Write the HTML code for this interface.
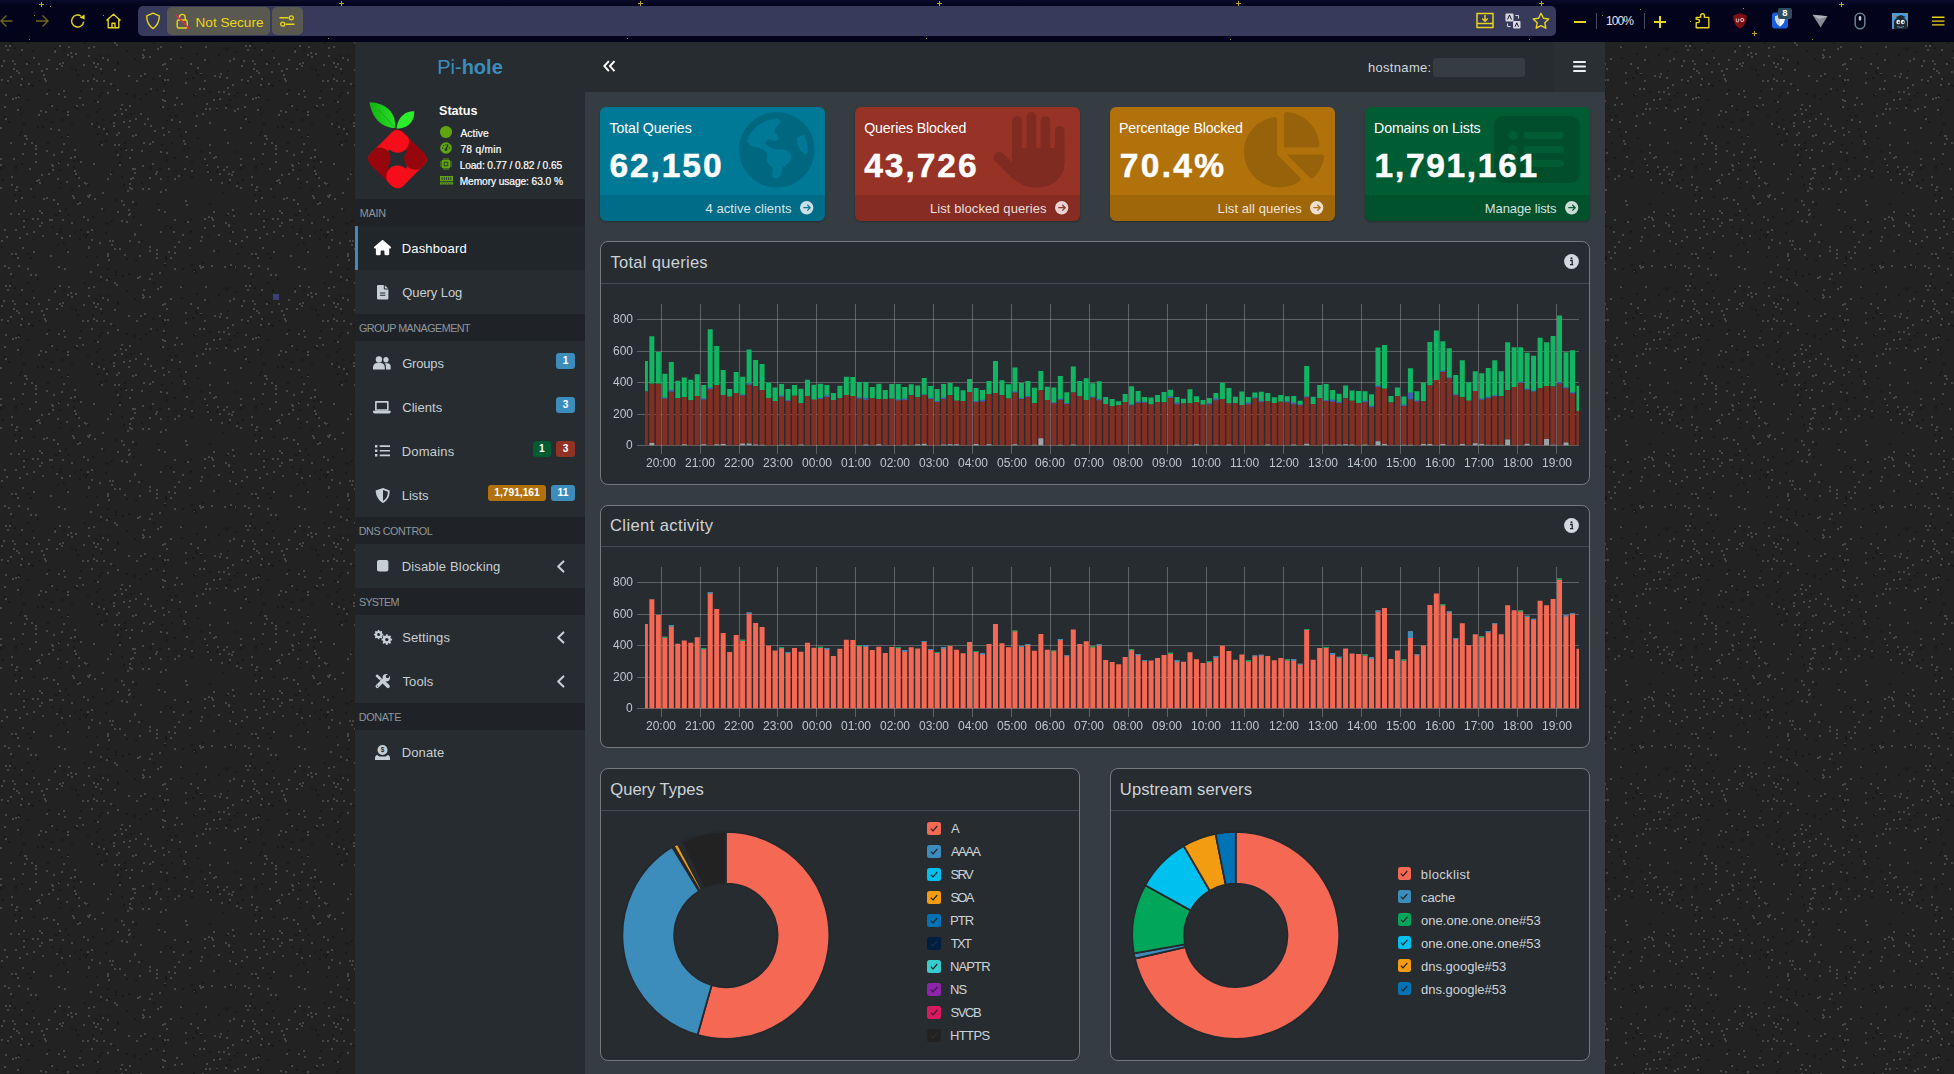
<!DOCTYPE html><html lang="en"><head><meta charset="utf-8"><title>Pi-hole</title><style>
*{box-sizing:border-box}
html,body{margin:0;padding:0}
body{width:1954px;height:1074px;overflow:hidden;position:relative;background:#222;font-family:"Liberation Sans",sans-serif;color:#cfd6db}
.abs{position:absolute}
svg{position:absolute;overflow:visible}
#chrome{position:absolute;left:0;top:0;width:1954px;height:42px;background:#03031b}
#chrome .urlbar{position:absolute;left:138px;top:6px;width:1418px;height:30px;border-radius:5px;background:#373a5b}
#chrome .chip{position:absolute;top:7px;height:28px;border-radius:5px;background:#5a594f}
#chrome .y{color:#e9d519}
.star{position:absolute;color:#e9d519;font-size:9px;line-height:9px}
#bg{position:absolute;left:0;top:42px;width:1954px;height:1032px}
#wrap{position:absolute;left:355px;top:42px;width:1250px;height:1032px;background:#353c42}
#logo{position:absolute;left:0;top:0;width:230px;height:50px;background:#272c30;color:#3c8dbc;font-size:20px;line-height:50px;text-align:center}
#logo b{font-weight:bold}
#nav{position:absolute;left:230px;top:0;width:1020px;height:50px;background:#272c30}
#side{position:absolute;left:0;top:50px;width:230px;height:982px;background:#272c30}
.hdr{position:absolute;left:0;width:230px;height:27px;background:#1f2327;color:#8e979d;font-size:10.8px;line-height:27px;white-space:nowrap}
.item{position:absolute;left:0;width:230px;height:44px;color:#c6cfd4;font-size:13px;line-height:44px;white-space:nowrap}
.item span.t{position:absolute;top:0.8px}
.item.active{background:#21262a;border-left:3px solid #3c8dbc;color:#fff}
.badge{position:absolute;top:12px;height:16px;border-radius:3px;color:#fff;font-weight:bold;font-size:10.2px;line-height:16.5px;text-align:center}
.sbox{position:absolute;top:65px;width:225px;height:114px;border-radius:6px;overflow:hidden;color:#fff;box-shadow:0 1px 2px rgba(0,0,0,.25)}
.sbox .ttl{position:absolute;top:12px;font-size:14.2px;line-height:18px;white-space:nowrap}
.sbox .num{position:absolute;top:39px;-webkit-text-stroke:.5px #fff;font-size:33.5px;line-height:40px;font-weight:bold;white-space:nowrap}
.sbox .foot{position:absolute;left:0;top:88px;width:225px;height:26px;background:rgba(0,0,0,.1);font-size:13px;line-height:26px;color:rgba(255,255,255,.85);white-space:nowrap}
.box{position:absolute;background:#272c30;border:1px solid #74797d;border-radius:8px}
.box .bh{position:absolute;left:0;top:0;right:0;height:42px;border-bottom:1px solid #454b50;font-size:16.6px;line-height:40px;color:#cdd3d8;white-space:nowrap}
.box .bh span{position:absolute;top:1px}
.lg{position:absolute;font-size:13px;line-height:16px;color:#cdd3d8;white-space:nowrap}
.lgb{position:absolute;width:13.600px;height:13.400px;border-radius:2.500px}
.ax{position:absolute;font-size:12px;line-height:12px;color:#bcc7cd;white-space:nowrap;will-change:transform}
</style></head><body>
<svg class="noise" width="0" height="0" style="position:absolute"><defs><pattern id="stars" width="240" height="240" patternUnits="userSpaceOnUse"><rect width="240" height="240" fill="#222222"/><path d="M82 38h2v2h-2zM101 166h2v2h-2zM12 18h2v2h-2zM210 137h2v2h-2zM24 93h2v2h-2zM149 14h2v2h-2zM232 129h2v2h-2zM54 9h2v2h-2zM22 111h2v2h-2zM107 17h2v2h-2zM61 23h2v2h-2zM141 108h2v2h-2zM15 211h2v2h-2zM144 31h2v2h-2zM57 161h2v2h-2zM160 149h2v2h-2zM15 147h2v2h-2zM149 101h2v2h-2zM12 56h2v2h-2zM11 142h2v2h-2zM219 34h2v2h-2zM74 107h2v2h-2zM36 138h2v2h-2zM30 146h2v2h-2zM78 143h2v2h-2zM208 174h2v2h-2zM46 26h2v2h-2zM148 146h2v2h-2zM163 48h2v2h-2zM95 24h2v2h-2zM140 182h2v2h-2zM16 144h2v2h-2zM15 158h2v2h-2zM52 127h2v2h-2zM174 136h2v2h-2zM109 198h2v2h-2zM80 119h2v2h-2zM149 236h2v2h-2zM116 92h2v2h-2zM76 63h2v2h-2zM203 46h2v2h-2zM178 199h2v2h-2zM62 20h2v2h-2zM147 76h2v2h-2zM134 126h2v2h-2zM224 87h2v2h-2zM186 114h2v2h-2zM73 155h2v2h-2zM18 30h2v2h-2zM131 107h2v2h-2zM42 193h2v2h-2zM87 38h2v2h-2zM125 107h2v2h-2zM10 171h2v2h-2zM19 195h2v2h-2zM142 146h2v2h-2zM202 224h2v2h-2zM209 80h2v2h-2zM87 177h2v2h-2zM89 152h2v2h-2zM127 148h2v2h-2zM204 116h2v2h-2zM17 215h2v2h-2zM23 69h2v2h-2zM121 178h2v2h-2zM170 16h2v2h-2zM15 187h2v2h-2zM179 79h2v2h-2zM165 147h2v2h-2zM174 210h2v2h-2zM114 72h2v2h-2zM183 98h2v2h-2zM227 171h2v2h-2zM88 5h2v2h-2zM118 90h2v2h-2zM43 156h2v2h-2zM29 126h2v2h-2zM15 55h2v2h-2zM196 73h2v2h-2zM33 189h2v2h-2zM63 101h2v2h-2zM100 234h2v2h-2zM223 127h2v2h-2zM20 42h2v2h-2zM114 102h2v2h-2zM140 71h2v2h-2zM226 35h2v2h-2zM209 110h2v2h-2zM221 140h2v2h-2zM71 180h2v2h-2zM106 91h2v2h-2zM174 226h2v2h-2zM97 59h2v2h-2zM38 21h2v2h-2zM45 38h2v2h-2zM59 168h2v2h-2zM59 3h2v2h-2zM124 212h2v2h-2zM150 46h2v2h-2zM67 72h2v2h-2zM1 37h2v2h-2zM107 136h2v2h-2zM94 156h2v2h-2zM144 81h2v2h-2zM32 176h2v2h-2zM219 131h2v2h-2zM158 167h2v2h-2zM173 189h2v2h-2zM13 116h2v2h-2zM230 222h2v2h-2zM199 223h2v2h-2zM174 204h2v2h-2zM143 100h2v2h-2zM101 102h2v2h-2zM100 26h2v2h-2zM123 162h2v2h-2zM102 15h2v2h-2zM48 17h2v2h-2zM53 112h2v2h-2zM41 28h2v2h-2zM87 153h2v2h-2zM13 26h2v2h-2zM0 145h2v2h-2zM38 137h2v2h-2zM25 93h2v2h-2zM157 6h2v2h-2zM18 223h2v2h-2zM53 157h2v2h-2zM96 38h2v2h-2zM162 64h2v2h-2zM88 154h2v2h-2zM93 121h2v2h-2zM31 29h2v2h-2zM217 124h2v2h-2zM119 122h2v2h-2zM123 79h2v2h-2zM21 36h2v2h-2zM26 191h2v2h-2zM87 189h2v2h-2zM67 122h2v2h-2zM212 177h2v2h-2zM41 132h2v2h-2zM5 52h2v2h-2zM135 92h2v2h-2zM37 176h2v2h-2zM139 234h2v2h-2zM6 194h2v2h-2zM135 76h2v2h-2zM164 221h2v2h-2zM23 178h2v2h-2zM216 66h2v2h-2zM132 93h2v2h-2zM232 42h2v2h-2zM91 197h2v2h-2zM57 136h2v2h-2zM138 199h2v2h-2zM128 84h2v2h-2zM162 57h2v2h-2zM156 207h2v2h-2zM201 194h2v2h-2zM218 49h2v2h-2zM206 61h2v2h-2zM209 102h2v2h-2zM189 205h2v2h-2zM58 51h2v2h-2zM132 126h2v2h-2zM91 187h2v2h-2zM7 7h2v2h-2zM202 71h2v2h-2zM120 66h2v2h-2zM49 177h2v2h-2zM154 88h2v2h-2zM114 206h2v2h-2zM185 89h2v2h-2zM93 20h2v2h-2zM56 26h2v2h-2zM58 120h2v2h-2zM50 86h2v2h-2zM52 123h2v2h-2zM159 230h2v2h-2zM156 215h2v2h-2zM0 122h2v2h-2zM232 167h2v2h-2zM88 204h2v2h-2zM164 21h2v2h-2zM213 169h2v2h-2zM30 232h2v2h-2zM99 200h2v2h-2zM182 192h2v2h-2zM51 122h2v2h-2zM227 45h2v2h-2zM111 202h2v2h-2zM162 85h2v2h-2zM22 205h2v2h-2zM184 101h2v2h-2zM118 102h2v2h-2zM190 21h2v2h-2zM185 40h2v2h-2zM43 32h2v2h-2zM7 38h2v2h-2zM151 231h2v2h-2zM119 206h2v2h-2zM167 37h2v2h-2zM156 211h2v2h-2zM152 121h2v2h-2zM168 89h2v2h-2zM39 140h2v2h-2zM140 33h2v2h-2zM5 3h2v2h-2zM204 185h2v2h-2zM166 26h2v2h-2zM134 191h2v2h-2zM35 111h2v2h-2zM223 49h2v2h-2zM211 223h2v2h-2zM54 7h2v2h-2zM64 54h2v2h-2zM74 128h2v2h-2zM61 195h2v2h-2zM150 83h2v2h-2zM66 139h2v2h-2zM107 213h2v2h-2zM33 15h2v2h-2zM232 189h2v2h-2zM90 229h2v2h-2zM117 169h2v2h-2zM149 208h2v2h-2zM231 132h2v2h-2zM107 211h2v2h-2zM234 224h2v2h-2zM128 33h2v2h-2zM136 38h2v2h-2zM134 130h2v2h-2zM4 223h2v2h-2zM112 198h2v2h-2zM46 155h2v2h-2zM1 198h2v2h-2zM204 38h2v2h-2zM44 36h2v2h-2zM121 158h2v2h-2zM185 30h2v2h-2zM142 15h2v2h-2zM83 174h2v2h-2zM132 135h2v2h-2zM142 123h2v2h-2zM200 198h2v2h-2zM27 226h2v2h-2zM143 14h2v2h-2zM63 48h2v2h-2zM70 10h2v2h-2zM197 25h2v2h-2zM129 115h2v2h-2zM143 7h2v2h-2zM194 228h2v2h-2zM233 16h2v2h-2zM113 83h2v2h-2zM156 129h2v2h-2zM155 131h2v2h-2zM51 177h2v2h-2zM70 115h2v2h-2zM130 136h2v2h-2zM206 122h2v2h-2zM129 63h2v2h-2zM178 133h2v2h-2zM224 224h2v2h-2zM237 66h2v2h-2zM236 143h2v2h-2zM228 51h2v2h-2zM215 114h2v2h-2zM35 106h2v2h-2zM31 100h2v2h-2zM113 80h2v2h-2zM18 171h2v2h-2zM61 109h2v2h-2zM18 54h2v2h-2zM171 77h2v2h-2zM200 31h2v2h-2zM229 198h2v2h-2zM39 183h2v2h-2zM164 169h2v2h-2zM93 36h2v2h-2zM64 226h2v2h-2zM35 119h2v2h-2zM56 191h2v2h-2zM24 101h2v2h-2zM226 124h2v2h-2zM41 170h2v2h-2zM213 57h2v2h-2zM41 180h2v2h-2zM110 131h2v2h-2zM103 86h2v2h-2zM107 50h2v2h-2zM91 81h2v2h-2zM23 184h2v2h-2zM93 4h2v2h-2zM86 141h2v2h-2zM117 112h2v2h-2zM180 4h2v2h-2zM98 84h2v2h-2zM132 159h2v2h-2zM75 131h2v2h-2zM16 28h2v2h-2zM235 201h2v2h-2zM58 224h2v2h-2zM26 21h2v2h-2zM67 69h2v2h-2zM10 231h2v2h-2zM199 46h2v2h-2zM69 193h2v2h-2zM33 209h2v2h-2zM108 217h2v2h-2zM233 173h2v2h-2zM209 66h2v2h-2zM103 38h2v2h-2zM137 235h2v2h-2zM131 146h2v2h-2zM126 179h2v2h-2zM83 22h2v2h-2zM71 14h2v2h-2zM204 176h2v2h-2zM46 108h2v2h-2zM229 18h2v2h-2zM68 4h2v2h-2zM162 22h2v2h-2zM205 66h2v2h-2zM21 155h2v2h-2zM219 56h2v2h-2zM17 67h2v2h-2zM220 31h2v2h-2zM116 2h2v2h-2zM86 141h2v2h-2zM106 237h2v2h-2zM234 68h2v2h-2zM159 33h2v2h-2zM11 134h2v2h-2zM181 61h2v2h-2zM28 41h2v2h-2zM67 12h2v2h-2zM46 51h2v2h-2zM79 160h2v2h-2zM78 135h2v2h-2zM194 52h2v2h-2zM74 114h2v2h-2zM128 172h2v2h-2zM45 69h2v2h-2zM88 205h2v2h-2zM4 64h2v2h-2zM9 3h2v2h-2zM4 187h2v2h-2zM129 141h2v2h-2zM48 131h2v2h-2zM121 62h2v2h-2zM114 27h2v2h-2zM168 209h2v2h-2zM166 110h2v2h-2zM168 126h2v2h-2zM139 213h2v2h-2zM227 100h2v2h-2zM129 78h2v2h-2zM176 55h2v2h-2zM58 87h2v2h-2zM50 213h2v2h-2zM225 180h2v2h-2zM186 162h2v2h-2zM35 103h2v2h-2zM88 13h2v2h-2zM214 33h2v2h-2zM3 18h2v2h-2zM160 189h2v2h-2zM225 65h2v2h-2zM110 41h2v2h-2zM14 21h2v2h-2zM170 215h2v2h-2zM97 222h2v2h-2zM129 171h2v2h-2zM72 153h2v2h-2zM62 177h2v2h-2zM75 11h2v2h-2zM117 47h2v2h-2zM40 68h2v2h-2zM114 0h2v2h-2zM67 93h2v2h-2zM84 140h2v2h-2zM82 62h2v2h-2zM8 225h2v2h-2zM79 55h2v2h-2zM91 46h2v2h-2zM0 85h2v2h-2zM97 21h2v2h-2zM121 71h2v2h-2zM128 167h2v2h-2zM51 63h2v2h-2zM129 198h2v2h-2zM1 23h2v2h-2zM67 209h2v2h-2zM22 36h2v2h-2zM102 150h2v2h-2zM10 100h2v2h-2zM5 76h2v2h-2zM77 161h2v2h-2zM59 21h2v2h-2zM149 135h2v2h-2zM218 192h2v2h-2zM39 168h2v2h-2zM228 183h2v2h-2zM200 225h2v2h-2zM152 99h2v2h-2zM195 83h2v2h-2zM184 126h2v2h-2zM38 72h2v2h-2zM185 158h2v2h-2zM164 37h2v2h-2zM11 211h2v2h-2zM213 183h2v2h-2zM228 131h2v2h-2zM160 109h2v2h-2zM187 179h2v2h-2zM207 129h2v2h-2zM35 232h2v2h-2zM134 192h2v2h-2zM129 145h2v2h-2zM213 208h2v2h-2zM205 4h2v2h-2zM211 175h2v2h-2zM149 204h2v2h-2zM228 182h2v2h-2zM174 177h2v2h-2zM164 58h2v2h-2zM21 7h2v2h-2zM10 34h2v2h-2zM163 92h2v2h-2zM26 96h2v2h-2zM213 115h2v2h-2zM142 12h2v2h-2zM160 4h2v2h-2zM160 136h2v2h-2zM174 62h2v2h-2zM125 67h2v2h-2zM0 116h2v2h-2zM204 17h2v2h-2zM191 128h2v2h-2zM229 137h2v2h-2zM23 168h2v2h-2z" fill="#474747"/><path d="M134 16h2v2h-2zM190 188h2v2h-2zM121 64h2v2h-2zM207 19h2v2h-2zM216 67h2v2h-2zM60 186h2v2h-2zM193 52h2v2h-2zM59 189h2v2h-2zM166 117h2v2h-2zM126 216h2v2h-2zM97 19h2v2h-2zM122 233h2v2h-2zM175 73h2v2h-2zM196 11h2v2h-2zM157 161h2v2h-2zM164 50h2v2h-2zM19 153h2v2h-2zM37 84h2v2h-2zM65 166h2v2h-2zM190 177h2v2h-2zM77 159h2v2h-2zM145 34h2v2h-2zM3 123h2v2h-2zM15 124h2v2h-2zM68 172h2v2h-2zM25 177h2v2h-2zM55 172h2v2h-2zM125 74h2v2h-2zM181 132h2v2h-2zM73 118h2v2h-2zM119 119h2v2h-2zM196 30h2v2h-2zM228 140h2v2h-2zM51 79h2v2h-2zM21 121h2v2h-2zM4 74h2v2h-2zM117 19h2v2h-2zM209 129h2v2h-2zM115 68h2v2h-2zM99 53h2v2h-2zM234 53h2v2h-2zM19 148h2v2h-2zM23 36h2v2h-2zM191 134h2v2h-2zM67 92h2v2h-2zM33 154h2v2h-2zM209 161h2v2h-2zM130 71h2v2h-2zM227 28h2v2h-2zM180 93h2v2h-2zM59 127h2v2h-2zM229 224h2v2h-2zM124 100h2v2h-2zM6 40h2v2h-2zM0 125h2v2h-2zM174 115h2v2h-2zM103 77h2v2h-2zM186 36h2v2h-2zM106 88h2v2h-2zM96 80h2v2h-2zM30 215h2v2h-2zM84 0h2v2h-2zM83 192h2v2h-2zM86 214h2v2h-2zM101 30h2v2h-2zM237 50h2v2h-2zM182 3h2v2h-2zM230 189h2v2h-2zM74 64h2v2h-2zM95 16h2v2h-2zM100 99h2v2h-2zM222 150h2v2h-2zM19 92h2v2h-2zM236 109h2v2h-2zM193 70h2v2h-2zM218 12h2v2h-2zM71 26h2v2h-2zM13 213h2v2h-2zM169 73h2v2h-2zM162 38h2v2h-2zM63 68h2v2h-2zM111 130h2v2h-2zM80 48h2v2h-2zM197 95h2v2h-2zM200 109h2v2h-2zM226 7h2v2h-2zM207 194h2v2h-2zM161 102h2v2h-2zM233 224h2v2h-2zM141 140h2v2h-2zM52 184h2v2h-2zM20 12h2v2h-2zM187 105h2v2h-2zM115 157h2v2h-2zM192 35h2v2h-2zM164 222h2v2h-2zM73 124h2v2h-2zM12 233h2v2h-2zM237 140h2v2h-2zM32 43h2v2h-2zM120 106h2v2h-2zM87 72h2v2h-2zM76 65h2v2h-2zM189 189h2v2h-2zM167 66h2v2h-2zM103 167h2v2h-2zM61 77h2v2h-2zM123 142h2v2h-2zM171 100h2v2h-2zM30 42h2v2h-2zM164 41h2v2h-2zM19 53h2v2h-2zM128 231h2v2h-2zM207 127h2v2h-2zM140 56h2v2h-2zM115 232h2v2h-2zM85 194h2v2h-2zM115 109h2v2h-2zM35 140h2v2h-2zM49 62h2v2h-2zM23 44h2v2h-2zM87 142h2v2h-2zM23 81h2v2h-2zM61 94h2v2h-2zM66 207h2v2h-2zM145 51h2v2h-2zM227 5h2v2h-2zM191 222h2v2h-2zM105 98h2v2h-2zM105 190h2v2h-2zM134 53h2v2h-2zM96 69h2v2h-2zM86 192h2v2h-2zM15 127h2v2h-2zM71 147h2v2h-2zM92 32h2v2h-2zM175 128h2v2h-2zM135 161h2v2h-2zM202 220h2v2h-2zM217 55h2v2h-2zM23 69h2v2h-2zM229 63h2v2h-2zM98 102h2v2h-2zM165 114h2v2h-2zM110 79h2v2h-2zM217 208h2v2h-2zM223 5h2v2h-2zM32 8h2v2h-2zM108 181h2v2h-2zM195 229h2v2h-2zM205 121h2v2h-2zM150 125h2v2h-2zM0 18h2v2h-2zM100 237h2v2h-2zM237 211h2v2h-2zM135 218h2v2h-2zM119 114h2v2h-2zM63 200h2v2h-2zM27 57h2v2h-2zM39 38h2v2h-2zM133 174h2v2h-2zM27 211h2v2h-2zM184 179h2v2h-2zM165 216h2v2h-2zM195 229h2v2h-2zM117 21h2v2h-2zM141 198h2v2h-2zM10 0h2v2h-2zM200 32h2v2h-2zM59 145h2v2h-2zM235 9h2v2h-2zM165 183h2v2h-2zM77 32h2v2h-2zM160 64h2v2h-2zM135 162h2v2h-2zM111 178h2v2h-2zM195 28h2v2h-2zM25 18h2v2h-2zM76 134h2v2h-2zM149 49h2v2h-2zM99 66h2v2h-2zM57 202h2v2h-2zM153 0h2v2h-2zM2 137h2v2h-2zM77 117h2v2h-2zM71 80h2v2h-2zM165 214h2v2h-2zM226 62h2v2h-2zM121 134h2v2h-2zM60 140h2v2h-2zM63 7h2v2h-2zM105 180h2v2h-2zM166 78h2v2h-2zM14 5h2v2h-2zM49 127h2v2h-2zM226 172h2v2h-2zM165 107h2v2h-2zM20 65h2v2h-2zM58 170h2v2h-2zM108 236h2v2h-2zM94 58h2v2h-2zM126 8h2v2h-2zM178 86h2v2h-2zM183 107h2v2h-2zM92 174h2v2h-2zM101 50h2v2h-2zM1 204h2v2h-2zM74 189h2v2h-2zM216 129h2v2h-2zM17 52h2v2h-2zM126 51h2v2h-2zM79 196h2v2h-2zM209 49h2v2h-2zM59 119h2v2h-2zM56 67h2v2h-2zM194 227h2v2h-2zM75 27h2v2h-2zM159 126h2v2h-2zM156 47h2v2h-2zM229 57h2v2h-2zM124 106h2v2h-2zM233 170h2v2h-2zM14 152h2v2h-2zM37 236h2v2h-2zM100 13h2v2h-2zM54 6h2v2h-2zM152 36h2v2h-2zM106 13h2v2h-2zM181 15h2v2h-2zM47 100h2v2h-2zM115 229h2v2h-2zM182 226h2v2h-2zM80 187h2v2h-2zM28 20h2v2h-2zM42 84h2v2h-2zM48 47h2v2h-2zM167 134h2v2h-2zM191 119h2v2h-2zM8 79h2v2h-2zM170 185h2v2h-2zM96 214h2v2h-2zM95 84h2v2h-2zM113 43h2v2h-2zM27 0h2v2h-2zM20 71h2v2h-2zM20 89h2v2h-2zM107 226h2v2h-2zM31 143h2v2h-2zM194 53h2v2h-2zM97 91h2v2h-2z" fill="#191919"/></pattern></defs></svg>
<svg id="bg" width="1954" height="1032" viewBox="0 0 1954 1032"><rect width="1954" height="1032" fill="url(#stars)"/><rect x="273" y="252" width="6" height="6" fill="#3b3f78"/></svg>
<div id="chrome"><div style="position:absolute;left:0;top:0;width:1954px;height:5px;background:linear-gradient(#0b0c2c,#03031b)"></div>
<div class="urlbar"></div>
<div class="chip" style="left:167px;width:103px"></div><div class="chip" style="left:272px;width:31px"></div>
<svg style="left:0;top:13px" width="14" height="16" viewBox="0 0 14 16"><path d="M12.5 8H1M6.5 2.5L1 8l5.5 5.5" fill="none" stroke="#6f661f" stroke-width="1.4"/></svg>
<svg style="left:35px;top:13px" width="14" height="16" viewBox="0 0 14 16"><path d="M1 8h12M7.5 2.5L13 8l-5.5 5.5" fill="none" stroke="#6f661f" stroke-width="1.4"/></svg>
<svg style="left:70px;top:13px" width="16" height="16" viewBox="0 0 16 16"><path d="M13.6 8.6A6 6 0 1 1 11.2 3.2" fill="none" stroke="#e9d519" stroke-width="1.4"/><path d="M9.6 4.6L14.6 1.6V6.6z" fill="#e9d519"/></svg>
<svg style="left:105px;top:13px" width="17" height="16" viewBox="0 0 17 16"><path d="M1.5 7.5L8.5 1.2l7 6.3M3.2 6.5V14.8h10.6V6.5M7 14.8V10.2h3v4.6" fill="none" stroke="#e9d519" stroke-width="1.4" stroke-linejoin="round"/></svg>
<svg style="left:145px;top:12px" width="16" height="18" viewBox="0 0 16 18"><path d="M8 1.2L14.3 3.8c0 5.6-1.8 9.7-6.3 12.8C3.5 13.5 1.7 9.4 1.7 3.8z" fill="none" stroke="#e9d519" stroke-width="1.4" stroke-linejoin="round"/></svg>
<svg style="left:175px;top:12px" width="15" height="18" viewBox="0 0 15 18"><rect x="2.2" y="8" width="10" height="8" rx="1.5" fill="none" stroke="#e9d519" stroke-width="1.4"/><path d="M4.4 8V5.3a2.9 2.9 0 0 1 5.8 0V8" fill="none" stroke="#e9d519" stroke-width="1.4"/><path d="M1 3l13 13.5" stroke="#e22850" stroke-width="1.4"/></svg>
<div class="abs y" style="left:195.5px;top:13.500px;font-size:13.600px;line-height:17px;white-space:nowrap">Not Secure</div>
<svg style="left:279px;top:14px" width="16" height="14" viewBox="0 0 16 14"><path d="M0.5 3.8H9.5M6.5 10.2H15.5" stroke="#e9d519" stroke-width="1.4"/><circle cx="12.3" cy="3.8" r="2" fill="none" stroke="#e9d519" stroke-width="1.3"/><circle cx="3.7" cy="10.2" r="2" fill="none" stroke="#e9d519" stroke-width="1.3"/></svg>
<svg style="left:1476px;top:12px" width="18" height="17" viewBox="0 0 18 17"><path d="M1 1.5h16v14H1zM1 11.5h16" fill="none" stroke="#e9d519" stroke-width="1.5" stroke-linejoin="round"/><path d="M9 3v6M6.2 6.5L9 9.3l2.8-2.8" fill="none" stroke="#e9d519" stroke-width="1.5"/></svg>
<svg style="left:1505px;top:13px" width="16" height="16" viewBox="0 0 16 16"><rect x="0.5" y="0.5" width="8" height="8" rx="1" fill="#d8d8e0"/><rect x="8" y="8" width="7.5" height="7.5" rx="1" fill="#d8d8e0"/><path d="M10.5 2.5h3v3M5.5 13.5h-3v-3" fill="none" stroke="#d8d8e0" stroke-width="1"/><path d="M2.5 6.5L4.5 2l2 4.5M10 13.8l1.8-4 1.8 4" fill="none" stroke="#03031b" stroke-width="0.9"/></svg>
<svg style="left:1532px;top:12px" width="18" height="17" viewBox="0 0 18 17"><path d="M9 1.3l2.4 5 5.4.7-4 3.8 1 5.4L9 13.6 4.2 16.2l1-5.4-4-3.8 5.4-.7z" fill="none" stroke="#e9d519" stroke-width="1.4" stroke-linejoin="round"/></svg>
<div class="abs" style="left:1574px;top:20.700px;width:12.200px;height:2px;background:#e9d519"></div>
<div class="abs" style="left:1596px;top:13px;width:1px;height:16px;background:#4a4a5c"></div>
<div class="abs" style="left:1606px;top:13.500px;font-size:12px;letter-spacing:-.9px;line-height:14px;color:#e4e4ec;white-space:nowrap">100%</div>
<div class="abs" style="left:1644px;top:13px;width:1px;height:16px;background:#4a4a5c"></div>
<div class="abs" style="left:1653.700px;top:20.700px;width:12.200px;height:2px;background:#e9d519"></div><div class="abs" style="left:1658.800px;top:15.900px;width:2px;height:12.100px;background:#e9d519"></div>
<svg style="left:1695px;top:12px" width="15" height="17" viewBox="0 0 15 17"><path d="M1.2 15.8V10.6h1.6a1.7 1.7 0 0 0 0-3.4H1.2V5.4h4.4V3.6a1.9 1.9 0 0 1 3.8 0v1.8h4.4v10.4z" fill="none" stroke="#e9d519" stroke-width="1.4" stroke-linejoin="round"/></svg>
<svg style="left:1733px;top:13px" width="14" height="16" viewBox="0 0 14 16"><path d="M7 .3L13.7 2.4c0 6.2-1.6 10.2-6.7 13.3C1.9 12.6.3 8.6.3 2.4z" fill="#800f14"/><path d="M3.3 5.6v2.2a1.2 1.2 0 0 0 2.4 0V5.6" fill="none" stroke="#e8e0e0" stroke-width="0.9"/><circle cx="9.2" cy="7" r="1.6" fill="none" stroke="#e8e0e0" stroke-width="0.9"/></svg>
<svg style="left:1772px;top:12px" width="16" height="17" viewBox="0 0 16 17"><rect x="0" y="0.500" width="16" height="16" rx="3" fill="#175ddc"/><path d="M8 2.800L13 4.200c0 5-1.300 7.800-5 10.300C4.300 12 3 9.200 3 4.200z" fill="#fff"/><path d="M8 4.600L4.600 5.500c.1 3.600 1 5.500 3.400 7.200z" fill="#175ddc"/><path d="M8 3L12.6 4.4c0 4.6-1.2 7.2-4.6 9.6C4.6 11.6 3.4 9 3.4 4.4z" fill="#fff"/><path d="M8 3L3.4 4.4c0 4.6 1.2 7.2 4.6 9.6z" fill="#175ddc" opacity=".25"/></svg>
<div class="abs" style="left:1778px;top:8px;width:14px;height:10.500px;border-radius:2px;background:#2f4d5e;color:#fff;font-size:9.500px;font-weight:bold;line-height:10.500px;text-align:center">8</div>
<svg style="left:1812px;top:14px" width="16" height="14" viewBox="0 0 16 14"><path d="M.5.8L15.5 2.2 8.6 13.4z" fill="#8a8a94"/><path d="M.5.8L15.5 2.2 7 5z" fill="#b4b4bd"/></svg>
<svg style="left:1854px;top:12px" width="12" height="18" viewBox="0 0 12 18"><rect x="1.2" y="1.2" width="9.6" height="15.6" rx="4.8" fill="none" stroke="#6c7f95" stroke-width="1.5"/><rect x="4.8" y="4" width="2.4" height="4.6" rx="1.2" fill="#c8ccd4"/></svg>
<svg style="left:1892px;top:12.5px" width="16" height="16" viewBox="0 0 16 16"><rect width="16" height="16" fill="#4b9bd8"/><path d="M2 16V9.500C2 6 5 4.800 8.500 4.800S15 6 15 9.500V13l1 1v2z" fill="#1d2731"/><path d="M3.500 4.300L9 2l5 2-5.500 2z" fill="#1d2731"/><ellipse cx="6.300" cy="9" rx="2" ry="2.200" fill="#e6eef2"/><ellipse cx="10.800" cy="9" rx="2" ry="2.200" fill="#e6eef2"/><circle cx="6.800" cy="9.300" r=".9" fill="#1d2731"/><circle cx="11.300" cy="9.300" r=".9" fill="#1d2731"/><circle cx="2.200" cy="3" r="1" fill="#e8752a"/><path d="M5 13.500c2 1 5 1 7 0" stroke="#6fb3e0" stroke-width=".8" fill="none"/></svg>
<svg style="left:1932px;top:14px" width="13" height="14" viewBox="0 0 13 14"><path d="M0 3.300h12.500M0 7.100h12.500M0 10.900h12.500" stroke="#e9d519" stroke-width="1.400" fill="none"/></svg>
<div class="abs" style="left:39px;top:4px;width:5px;height:1px;background:#b8a826"></div><div class="abs" style="left:41px;top:2px;width:1px;height:5px;background:#b8a826"></div>
<div class="abs" style="left:339px;top:3px;width:5px;height:1px;background:#b8a826"></div><div class="abs" style="left:341px;top:1px;width:1px;height:5px;background:#b8a826"></div>
<div class="abs" style="left:638px;top:3px;width:5px;height:1px;background:#b8a826"></div><div class="abs" style="left:640px;top:1px;width:1px;height:5px;background:#b8a826"></div>
<div class="abs" style="left:937px;top:3px;width:5px;height:1px;background:#b8a826"></div><div class="abs" style="left:939px;top:1px;width:1px;height:5px;background:#b8a826"></div>
<div class="abs" style="left:1236px;top:3px;width:5px;height:1px;background:#b8a826"></div><div class="abs" style="left:1238px;top:1px;width:1px;height:5px;background:#b8a826"></div>
<div class="abs" style="left:1539px;top:3px;width:5px;height:1px;background:#b8a826"></div><div class="abs" style="left:1541px;top:1px;width:1px;height:5px;background:#b8a826"></div>
<div class="abs" style="left:1839px;top:4px;width:5px;height:1px;background:#b8a826"></div><div class="abs" style="left:1841px;top:2px;width:1px;height:5px;background:#b8a826"></div>
<div class="abs" style="left:1752px;top:33px;width:5px;height:1px;background:#b8a826"></div><div class="abs" style="left:1754px;top:31px;width:1px;height:5px;background:#b8a826"></div>
<div class="abs" style="left:50px;top:6px;width:1px;height:1px;background:#a89a2a"></div>
<div class="abs" style="left:29px;top:39px;width:1px;height:1px;background:#a89a2a"></div>
<div class="abs" style="left:328px;top:38px;width:1px;height:1px;background:#a89a2a"></div>
<div class="abs" style="left:627px;top:38px;width:1px;height:1px;background:#a89a2a"></div>
<div class="abs" style="left:926px;top:38px;width:1px;height:1px;background:#a89a2a"></div>
<div class="abs" style="left:1230px;top:39px;width:1px;height:1px;background:#a89a2a"></div>
<div class="abs" style="left:1529px;top:39px;width:1px;height:1px;background:#a89a2a"></div>
<div class="abs" style="left:1812px;top:39px;width:1px;height:1px;background:#a89a2a"></div>
<div class="abs" style="left:1640px;top:9px;width:1px;height:1px;background:#a89a2a"></div>
<div class="abs" style="left:1743px;top:8px;width:1px;height:1px;background:#a89a2a"></div>
<div class="abs" style="left:1690px;top:21px;width:1px;height:1px;background:#a89a2a"></div>
<div class="abs" style="left:1906px;top:13px;width:1px;height:1px;background:#a89a2a"></div>
<div class="abs" style="left:103px;top:15px;width:1px;height:1px;background:#a89a2a"></div>
<div class="abs" style="left:34px;top:15px;width:1px;height:1px;background:#a89a2a"></div>
<div class="abs" style="left:1602px;top:15px;width:1px;height:1px;background:#a89a2a"></div>
</div>
<div id="wrap">
<div id="logo">Pi-<b>hole</b></div>
<div id="nav">
<svg style="left:17.700px;top:18.300px" width="13.200" height="12.200" viewBox="0 0 14 13"><path d="M6.2 1.2L1.4 6.5l4.8 5.3M12.2 1.2L7.4 6.5l4.8 5.3" fill="none" stroke="#fff" stroke-width="2.1"/></svg>
<div class="abs" style="left:782.95px;letter-spacing:0.319px;top:17px;font-size:13px;line-height:18px;color:#d2d8dc;white-space:nowrap">hostname:</div>
<div class="abs" style="left:848px;top:16px;width:92px;height:19px;border-radius:3px;background:#353c42"></div>
<div class="abs" style="left:969px;top:0;width:51px;height:50px;background:#2a2f33"></div>
<div class="abs" style="left:988px;top:19px;width:13px;height:2px;border-radius:1px;background:#eef1f4;box-shadow:0 4.5px 0 #eef1f4,0 9px 0 #eef1f4"></div>
</div>
<div id="side">
<svg style="left:12.5px;top:10px" width="59" height="87" viewBox="0 0 59 87">
<defs><linearGradient id="lf" x1="0" y1="0" x2="1" y2="0"><stop offset="0" stop-color="#12b212"/><stop offset="1" stop-color="#26e026"/></linearGradient>
<clipPath id="dm"><rect x="-23" y="-23" width="46" height="46" rx="7.5" transform="translate(29.5 57.1) rotate(45)"/></clipPath></defs>
<path d="M1.5 0.2C12 0.5 22.5 5 26 15.5c.9 3.2 1.3 7 1.3 10.600C16 25.500 4.500 19 1.500 0.200z" fill="url(#lf)"/>
<path d="M10.700 8L27 25.700" stroke="#109510" stroke-width=".55" fill="none"/><path d="M46.3 9.200C38 8.800 30 14 28.500 26.400 37 27 46.500 22 46.300 9.200z" fill="#2bee2b"/>
<g clip-path="url(#dm)">
<path d="M29.5 57L29.5 20-8 57z" fill="#f60d1a"/>
<path d="M29.5 57L-8 57 29.5 95z" fill="#96060c"/>
<path d="M29.5 57L29.5 95 67 57z" fill="#f60d1a"/>
<path d="M29.5 57L67 57 29.5 20z" fill="#96060c"/>
<rect x="20.3" y="47.9" width="18.4" height="18.4" fill="#272c30"/>
<circle cx="29.7" cy="39.5" r="11.2" fill="#f60d1a"/>
<circle cx="47.4" cy="56.6" r="11.2" fill="#96060c"/>
<circle cx="29.5" cy="74.8" r="11.2" fill="#f60d1a"/>
<circle cx="11.4" cy="56.6" r="11.2" fill="#96060c"/>
</g></svg>
<div class="abs" style="left:84px;top:10px;font-size:12.600px;font-weight:bold;color:#fff;line-height:18px">Status</div>
<div class="abs" style="left:105.40px;letter-spacing:0.090px;top:34.5px;font-size:10.200px;line-height:14px;color:#fff;white-space:nowrap;-webkit-text-stroke:.2px #fff">Active</div>
<div class="abs" style="left:105.40px;letter-spacing:0.293px;top:50.5px;font-size:10.200px;line-height:14px;color:#fff;white-space:nowrap;-webkit-text-stroke:.2px #fff">78 q/min</div>
<div class="abs" style="left:104.65px;letter-spacing:-0.100px;top:66.5px;font-size:10.200px;line-height:14px;color:#fff;white-space:nowrap;-webkit-text-stroke:.2px #fff">Load: 0.77 / 0.82 / 0.65</div>
<div class="abs" style="left:104.65px;letter-spacing:-0.076px;top:82.5px;font-size:10.200px;line-height:14px;color:#fff;white-space:nowrap;-webkit-text-stroke:.2px #fff">Memory usage: 63.0 %</div>
<div class="abs" style="left:85px;top:34px;width:11.500px;height:11.500px;border-radius:50%;background:#5ea50f"></div>
<svg style="left:85px;top:50px" width="12" height="12" viewBox="0 0 12 12"><circle cx="6" cy="6" r="5.800" fill="#5ea50f"/><path d="M6 7.500L7.800 3" stroke="#272c30" stroke-width="1.300" stroke-linecap="round"/><circle cx="6" cy="7.600" r="1.300" fill="#272c30"/><circle cx="2.700" cy="6" r=".7" fill="#272c30"/><circle cx="9.300" cy="6" r=".7" fill="#272c30"/><circle cx="3.700" cy="3.600" r=".7" fill="#272c30"/><circle cx="6" cy="2.600" r=".7" fill="#272c30"/></svg>
<svg style="left:85px;top:66px" width="12" height="12" viewBox="0 0 12 12"><rect x="1.800" y="1.800" width="8.400" height="8.400" rx="1.200" fill="#5ea50f"/><rect x="3.800" y="3.800" width="4.400" height="4.400" fill="#272c30"/><rect x="4.600" y="4.600" width="2.800" height="2.800" fill="#5ea50f"/><path d="M4 0v12M6 0v12M8 0v12M0 4h12M0 6h12M0 8h12" stroke="#5ea50f" stroke-width=".9" stroke-dasharray="1.800 8.400"/></svg>
<svg style="left:85px;top:83.500px" width="13" height="9" viewBox="0 0 13 9"><path d="M0 0h13v5.200H0z" fill="#5ea50f"/><path d="M2.200 1.200v2.800M4.400 1.200v2.800M6.500 1.200v2.800M8.600 1.200v2.800M10.800 1.200v2.800" stroke="#272c30" stroke-width=".9"/><path d="M0 6.200h13v2.400H0z" fill="#5ea50f"/><path d="M2.200 7.200v1.400M4.400 7.200v1.400M6.500 7.200v1.400M8.600 7.200v1.400M10.800 7.200v1.400" stroke="#272c30" stroke-width=".8"/></svg>
<div class="hdr" style="top:107px"><span style="position:absolute;top:0.5px;left:4.65px;letter-spacing:-0.167px">MAIN</span></div>
<div class="item active" style="top:134px">
<svg style="margin-left:-3px;left:18.900px;top:14.1px" width="17.100" height="15.200" viewBox="0 0 576 512"><path d="M575.8 255.5c0 18-15 32.1-32 32.1h-32l.7 160.2c0 2.700-.2 5.400-.5 8.100V472c0 22.100-17.900 40-40 40H456c-1.100 0-2.200 0-3.300-.1-1.400.1-2.800.1-4.200.1H416 392c-22.100 0-40-17.900-40-40V448 384c0-17.700-14.300-32-32-32H256c-17.700 0-32 14.300-32 32v64 24c0 22.100-17.900 40-40 40H160 128.100c-1.500 0-3-.1-4.500-.2-1.200.1-2.400.2-3.600.2H104c-22.100 0-40-17.900-40-40V360c0-.9 0-1.900.1-2.800V287.600H32c-18 0-32-14-32-32.100 0-9 3-17 10-24L266.400 8c7-7 15-8 22-8s15 2 21 7L564.800 231.500c8 7 12 15 11 24z" fill="#fff"/></svg>
<span class="t" style="left:43.70px;letter-spacing:0.169px">Dashboard</span>
</div>
<div class="item" style="top:178px">
<svg style="left:21.800px;top:14.7px" width="11.400" height="14.600" viewBox="0 0 11.400 14.600"><path d="M1.300 0H6.800V3.400a1.100 1.100 0 0 0 1.100 1.100H11.400V13.300a1.300 1.300 0 0 1-1.300 1.300H1.300A1.300 1.300 0 0 1 0 13.300V1.300A1.300 1.300 0 0 1 1.300 0zM7.800 0.200L11.200 3.600H7.800z" fill="#c6cfd4"/><path d="M3 8h5.400M3 10.300h5.400" stroke="#272c30" stroke-width="1.100"/></svg>
<span class="t" style="left:47.20px;letter-spacing:-0.075px">Query Log</span>
</div>
<div class="hdr" style="top:222px"><span style="position:absolute;top:0.5px;left:4.00px;letter-spacing:-0.543px">GROUP MANAGEMENT</span></div>
<div class="item" style="top:249px">
<svg style="left:18.300px;top:15.2px" width="17.700" height="13.500" viewBox="0 0 18.500 13.500" preserveAspectRatio="none"><circle cx="6.200" cy="3.500" r="3.300" fill="#c6cfd4"/><path d="M0 13.500v-2.200a4.300 4.300 0 0 1 4.300-4.300h3.800a4.300 4.300 0 0 1 4.300 4.300v2.200z" fill="#c6cfd4"/><circle cx="13.600" cy="3.800" r="2.700" fill="#c6cfd4"/><path d="M13.600 13.500v-2.600c0-1.500-.6-2.800-1.600-3.700h3a3.500 3.500 0 0 1 3.500 3.500v2.800z" fill="#c6cfd4"/></svg>
<span class="t" style="left:47.20px;letter-spacing:-0.180px">Groups</span>
<span class="badge" style="left:201.0px;width:19.0px;background:#3c8dbc">1</span>
</div>
<div class="item" style="top:293px">
<svg style="left:18.300px;top:15.8px" width="17.700" height="12.500" viewBox="0 0 18.500 12.500" preserveAspectRatio="none"><path d="M3 0.800H15.500V9H3z" fill="none" stroke="#c6cfd4" stroke-width="1.700" stroke-linejoin="round"/><path d="M0 9.800H18.500V10.800a1.700 1.700 0 0 1-1.700 1.700H1.700A1.700 1.700 0 0 1 0 10.800z" fill="#c6cfd4"/></svg>
<span class="t" style="left:47.20px;letter-spacing:0.050px">Clients</span>
<span class="badge" style="left:201.0px;width:19.0px;background:#3c8dbc">3</span>
</div>
<div class="item" style="top:337px">
<svg style="left:20px;top:16.2px" width="15" height="11.500" viewBox="0 0 15 11.500"><path d="M0 0h2.400v2.400H0zM0 4.550h2.400v2.400H0zM0 9.100h2.400v2.400H0z" fill="#c6cfd4"/><path d="M4.700 1.200H15M4.700 5.750H15M4.700 10.300H15" stroke="#c6cfd4" stroke-width="1.700"/></svg>
<span class="t" style="left:46.70px;letter-spacing:0.200px">Domains</span>
<span class="badge" style="left:178.0px;width:17.5px;background:#005c32">1</span>
<span class="badge" style="left:201.0px;width:19.0px;background:#913225">3</span>
</div>
<div class="item" style="top:381px">
<svg style="left:20.500px;top:14.5px" width="14" height="15" viewBox="0 0 14 15"><path d="M7 0L13.600 2.500c.3 5.500-1.800 9.800-6.600 12.500C2.200 12.300.1 8-.4 2.500z" fill="#c6cfd4"/><path d="M7 2V13c3.400-2.100 4.900-5.200 4.900-9.200z" fill="#272c30"/></svg>
<span class="t" style="left:46.70px;letter-spacing:0.025px">Lists</span>
<span class="badge" style="left:133.0px;width:58.0px;background:#b1720c">1,791,161</span>
<span class="badge" style="left:196.0px;width:24.0px;background:#3c8dbc">11</span>
</div>
<div class="hdr" style="top:425px"><span style="position:absolute;top:0.5px;left:3.75px;letter-spacing:-0.460px">DNS CONTROL</span></div>
<div class="item" style="top:452px">
<svg style="left:22px;top:16.3px" width="11.400" height="11.400" viewBox="0 0 11.400 11.400"><rect width="11.400" height="11.400" rx="2" fill="#c6cfd4"/></svg>
<span class="t" style="left:46.70px;letter-spacing:0.170px">Disable Blocking</span>
<svg style="left:200.600px;top:16.100px" width="9" height="13" viewBox="0 0 9 13"><path d="M7.400 1.400L2.200 6.500 7.400 11.600" fill="none" stroke="#c6cfd4" stroke-width="2.100" stroke-linecap="round" stroke-linejoin="round"/></svg>
</div>
<div class="hdr" style="top:496px"><span style="position:absolute;top:0.5px;left:4.00px;letter-spacing:-0.790px">SYSTEM</span></div>
<div class="item" style="top:523px">
<svg style="left:18.500px;top:14.5px" width="18.500" height="15" viewBox="0 0 18.500 15"><rect x="3.83" y="-0.02" width="1.54" height="9.24" fill="#c6cfd4" transform="rotate(0 4.60 4.60)"/><rect x="3.83" y="-0.02" width="1.54" height="9.24" fill="#c6cfd4" transform="rotate(45 4.60 4.60)"/><rect x="3.83" y="-0.02" width="1.54" height="9.24" fill="#c6cfd4" transform="rotate(90 4.60 4.60)"/><rect x="3.83" y="-0.02" width="1.54" height="9.24" fill="#c6cfd4" transform="rotate(135 4.60 4.60)"/><circle cx="4.600" cy="4.600" r="3.600" fill="#c6cfd4"/><circle cx="4.600" cy="4.600" r="1.500" fill="#272c30"/><rect x="11.92" y="4.32" width="1.76" height="10.56" fill="#c6cfd4" transform="rotate(0 12.80 9.60)"/><rect x="11.92" y="4.32" width="1.76" height="10.56" fill="#c6cfd4" transform="rotate(45 12.80 9.60)"/><rect x="11.92" y="4.32" width="1.76" height="10.56" fill="#c6cfd4" transform="rotate(90 12.80 9.60)"/><rect x="11.92" y="4.32" width="1.76" height="10.56" fill="#c6cfd4" transform="rotate(135 12.80 9.60)"/><circle cx="12.800" cy="9.600" r="4.100" fill="#c6cfd4"/><circle cx="12.800" cy="9.600" r="1.700" fill="#272c30"/></svg>
<span class="t" style="left:47.20px;letter-spacing:0.107px">Settings</span>
<svg style="left:200.600px;top:16.100px" width="9" height="13" viewBox="0 0 9 13"><path d="M7.400 1.400L2.200 6.500 7.400 11.600" fill="none" stroke="#c6cfd4" stroke-width="2.100" stroke-linecap="round" stroke-linejoin="round"/></svg>
</div>
<div class="item" style="top:567px">
<svg style="left:19.800px;top:14.6px" width="15.400" height="14.600" viewBox="0 0 15.400 14.600"><path d="M2.300 12.300L8.700 6" stroke="#c6cfd4" stroke-width="3.500" stroke-linecap="round"/><circle cx="11.300" cy="3.700" r="3.700" fill="#c6cfd4"/><path d="M11.600 3.400L15.800 1.400 13.200 -1z" fill="#272c30"/><circle cx="12.500" cy="2.500" r="1.700" fill="#272c30"/><path d="M13 12.300L9.400 8.800" stroke="#c6cfd4" stroke-width="3.700" stroke-linecap="round"/><path d="M9.400 8.800L2 1.800" stroke="#c6cfd4" stroke-width="2.600" stroke-linecap="round"/><path d="M4.800 6.600L6.600 4.500" stroke="#272c30" stroke-width=".5"/><circle cx="2.500" cy="12.100" r=".6" fill="#272c30"/></svg>
<span class="t" style="left:47.45px;letter-spacing:0.138px">Tools</span>
<svg style="left:200.600px;top:16.100px" width="9" height="13" viewBox="0 0 9 13"><path d="M7.400 1.400L2.200 6.500 7.400 11.600" fill="none" stroke="#c6cfd4" stroke-width="2.100" stroke-linecap="round" stroke-linejoin="round"/></svg>
</div>
<div class="hdr" style="top:611px"><span style="position:absolute;top:0.5px;left:3.75px;letter-spacing:-0.320px">DONATE</span></div>
<div class="item" style="top:638px">
<svg style="left:20px;top:14.5px" width="15" height="15" viewBox="0 0 15 15"><circle cx="7.500" cy="5" r="5" fill="#c6cfd4"/><path d="M0 13.300c0-1.600 1-3.300 2.300-3.300l2 1.500h6.400l2-1.500C14 10 15 11.700 15 13.300V15H0z" fill="#c6cfd4"/><text x="7.500" y="7.300" font-size="6.500" font-weight="bold" text-anchor="middle" fill="#272c30" font-family='"Liberation Sans",sans-serif'>$</text></svg>
<span class="t" style="left:46.70px;letter-spacing:0.120px">Donate</span>
</div>
</div>
<div class="sbox" style="left:245px;background:#007997">
<svg style="left:138.800px;top:4.600px" width="75.600" height="75.600" viewBox="0 0 75.600 75.600"><defs><clipPath id="gc"><circle cx="37.800" cy="37.800" r="37.800"/></clipPath></defs><circle cx="37.800" cy="37.800" r="37.800" fill="#006780"/><g clip-path="url(#gc)" fill="#007997"><path d="M40.2 7.9C37.9 6.3 38.4 6.5 32.8 7.4C27.2 8.3 29.4 7.4 23.5 10.7C17.6 14.0 20.1 11.6 15.1 17.2C10.1 22.8 10.3 22.8 8.6 27.5C6.9 32.2 8.1 28.9 10.0 31.2C11.9 33.5 10.3 32.6 14.2 34.5C18.1 36.4 17.6 35.3 21.6 36.8C25.6 38.3 24.1 36.6 26.3 39.1C28.5 41.6 27.5 40.9 28.1 44.2C28.7 47.5 26.9 45.6 28.1 48.9C29.3 52.2 29.9 51.2 31.8 54.0C33.7 56.8 33.2 54.4 33.7 57.3C34.2 60.2 32.6 59.9 33.2 62.8C33.8 65.7 33.6 65.3 35.6 66.1C37.6 66.9 37.1 66.6 39.3 65.2C41.5 63.8 40.7 64.9 42.1 61.9C43.5 58.9 41.6 59.4 43.5 56.3C45.4 53.2 45.1 55.4 47.7 52.6C50.3 49.8 50.0 51.1 51.4 48.0C52.8 44.9 52.8 46.3 51.9 43.3C51.0 40.3 51.6 41.1 48.6 39.1C45.6 37.1 47.7 38.0 43.0 37.2C38.3 36.4 39.6 38.2 34.6 36.8C29.6 35.4 30.7 35.3 28.1 33.1C25.5 30.9 26.4 32.0 26.7 30.3C27.0 28.6 27.1 28.7 29.1 27.9C31.1 27.1 30.2 27.6 32.8 27.9C35.4 28.2 34.8 29.4 37.0 28.9C39.2 28.4 38.8 28.4 39.3 26.5C39.8 24.6 39.5 25.5 38.4 23.3C37.3 21.1 36.6 22.3 36.0 20.0C35.4 17.7 35.2 18.9 36.5 16.3C37.8 13.7 38.6 14.9 39.8 12.1C41.0 9.3 42.5 9.5 40.2 7.9z"/><path d="M64.4 23.3C62.5 23.8 61.9 23.4 59.8 25.1C57.7 26.8 58.1 25.1 58.1 28.4C58.1 31.7 58.3 31.2 59.8 34.9C61.3 38.6 60.0 37.4 62.6 39.6C65.2 41.8 65.7 43.2 67.7 41.6C69.7 40.0 68.8 39.3 68.6 34.9C68.4 30.5 68.3 32.2 67.2 28.4C66.1 24.6 66.3 25.3 65.4 23.6C64.5 21.9 66.3 22.8 64.4 23.3z"/></g></svg>
<div class="ttl" style="left:9.55px;letter-spacing:-0.117px">Total Queries</div><div class="num" style="left:9.50px;letter-spacing:1.910px">62,150</div>
<div class="foot"><span style="position:absolute;top:.8px;left:105.55px;letter-spacing:0.050px">4 active clients</span><svg style="left:199.6px;top:6.300px" width="13.400" height="13.400" viewBox="0 0 13.400 13.400"><circle cx="6.700" cy="6.700" r="6.700" fill="rgba(255,255,255,.8)"/><path d="M3.300 6.700H10M7.300 3.800L10.200 6.700 7.300 9.600" fill="none" stroke="#007997" stroke-width="1.250"/></svg></div>
</div>
<div class="sbox" style="left:500px;background:#963226">
<svg style="left:138px;top:4.600px" width="72" height="76" viewBox="0 0 72 76"><g fill="none" stroke="#7f2b21" stroke-linecap="round"><path d="M23.900 9V45" stroke-width="9.600"/><path d="M38.400 4.800V45" stroke-width="9.600"/><path d="M52.400 9V45" stroke-width="9.600"/><path d="M66.700 18.800V50" stroke-width="9.600"/><path d="M6.200 45.400L24 63.200" stroke-width="10.800"/></g><path d="M19.100 36H71.500V51C71.500 66 59 75.600 43 75.600C33 75.600 25.500 71 19.600 65.700L8 55 19.100 52z" fill="#7f2b21"/></svg>
<div class="ttl" style="left:9.20px;letter-spacing:-0.136px">Queries Blocked</div><div class="num" style="left:9.20px;letter-spacing:1.990px">43,726</div>
<div class="foot"><span style="position:absolute;top:.8px;left:74.90px;letter-spacing:0.092px">List blocked queries</span><svg style="left:199.6px;top:6.300px" width="13.400" height="13.400" viewBox="0 0 13.400 13.400"><circle cx="6.700" cy="6.700" r="6.700" fill="rgba(255,255,255,.8)"/><path d="M3.300 6.700H10M7.300 3.800L10.200 6.700 7.300 9.600" fill="none" stroke="#963226" stroke-width="1.250"/></svg></div>
</div>
<div class="sbox" style="left:755px;background:#b1720c">
<svg style="left:134px;top:4.600px" width="80.200" height="75.500" viewBox="0 0 544 512"><path d="M527.79 288H290.5l158.03 158.03c6.040 6.040 15.980 6.530 22.190.68 38.700-36.460 65.320-85.610 73.130-140.860 1.340-9.460-6.510-17.850-16.060-17.850zm-15.830-64.800C503.720 103.740 408.260 8.280 288.800.04 279.680-.59 272 7.100 272 16.240V240h223.770c9.140 0 16.820-7.680 16.190-16.800zM224 288V50.710c0-9.550-8.390-17.400-17.840-16.060C86.990 51.490-4.100 155.600.14 280.370 4.500 408.510 114.830 513.590 243.030 511.980c50.400-.63 96.970-16.870 135.260-44.030 7.900-5.600 8.420-17.230 1.570-24.080L224 288z" fill="#98620a"/></svg>
<div class="ttl" style="left:9.10px;letter-spacing:-0.194px">Percentage Blocked</div><div class="num" style="left:9.75px;letter-spacing:2.325px">70.4%</div>
<div class="foot"><span style="position:absolute;top:.8px;left:107.60px;letter-spacing:0.070px">List all queries</span><svg style="left:199.6px;top:6.300px" width="13.400" height="13.400" viewBox="0 0 13.400 13.400"><circle cx="6.700" cy="6.700" r="6.700" fill="rgba(255,255,255,.8)"/><path d="M3.300 6.700H10M7.300 3.800L10.200 6.700 7.300 9.600" fill="none" stroke="#b1720c" stroke-width="1.250"/></svg></div>
</div>
<div class="sbox" style="left:1010px;background:#005c32">
<svg style="left:129px;top:8.800px" width="85.600" height="67" viewBox="0 0 85.600 67"><rect width="85.600" height="67" rx="9.400" fill="#004e2b"/><g fill="#005c32"><circle cx="19" cy="19.400" r="4.700"/><circle cx="19" cy="33.500" r="4.700"/><circle cx="19" cy="47.600" r="4.700"/><rect x="29.500" y="15.900" width="40.400" height="7" rx="3.500"/><rect x="29.500" y="30" width="40.400" height="7" rx="3.500"/><rect x="29.500" y="44.100" width="40.400" height="7" rx="3.500"/></g></svg>
<div class="ttl" style="left:9.10px;letter-spacing:-0.153px">Domains on Lists</div><div class="num" style="left:9.60px;letter-spacing:1.681px">1,791,161</div>
<div class="foot"><span style="position:absolute;top:.8px;left:119.80px;letter-spacing:-0.105px">Manage lists</span><svg style="left:199.6px;top:6.300px" width="13.400" height="13.400" viewBox="0 0 13.400 13.400"><circle cx="6.700" cy="6.700" r="6.700" fill="rgba(255,255,255,.8)"/><path d="M3.300 6.700H10M7.300 3.800L10.200 6.700 7.300 9.600" fill="none" stroke="#005c32" stroke-width="1.250"/></svg></div>
</div>
<div class="box" style="left:245px;top:199px;width:990px;height:244px"><div class="bh" style="height:42px"><span style="top:1px;left:9.45px;letter-spacing:0.262px">Total queries</span></div>
<svg style="left:962.500px;top:12.0px" width="15" height="15" viewBox="0 0 15 15"><circle cx="7.500" cy="7.500" r="7.400" fill="#d2d8de"/><circle cx="7.500" cy="4.300" r="1.050" fill="#23272b"/><path d="M6.100 6.500h2.100v4M6 10.700h3.200" fill="none" stroke="#23272b" stroke-width="1.300"/></svg>
<svg style="left:-1px;top:-1px" width="990" height="244" viewBox="600 241 990 244" shape-rendering="crispEdges"><path d="M661.5 304.0V453.7M700.5 304.0V453.7M739.5 304.0V453.7M777.5 304.0V453.7M816.5 304.0V453.7M855.5 304.0V453.7M894.5 304.0V453.7M933.5 304.0V453.7M972.5 304.0V453.7M1011.5 304.0V453.7M1050.5 304.0V453.7M1089.5 304.0V453.7M1128.5 304.0V453.7M1167.5 304.0V453.7M1206.5 304.0V453.7M1244.5 304.0V453.7M1283.5 304.0V453.7M1322.5 304.0V453.7M1361.5 304.0V453.7M1400.5 304.0V453.7M1439.5 304.0V453.7M1478.5 304.0V453.7M1517.5 304.0V453.7M1556.5 304.0V453.7" stroke="rgba(255,255,255,.26)" stroke-width="1" fill="none"/><path d="M637.0 445.5H1579.0M637.0 414.5H1579.0M637.0 382.5H1579.0M637.0 351.5H1579.0M637.0 319.5H1579.0" stroke="rgba(255,255,255,.26)" stroke-width="1" fill="none"/><clipPath id="cp241"><rect x="645.0" y="281" width="934.0" height="200"/></clipPath><g clip-path="url(#cp241)" shape-rendering="auto"><path d="M642.89 361.01h5.00v30.44h-5.00zM649.37 336.29h5.00v47.47h-5.00zM655.86 351.93h5.00v31.83h-5.00zM662.34 373.71h5.00v24.71h-5.00zM668.82 362.12h5.00v29.32h-5.00zM675.31 380.69h5.00v17.45h-5.00zM681.79 377.62h5.00v19.69h-5.00zM688.27 379.86h5.00v20.39h-5.00zM694.76 374.13h5.00v21.92h-5.00zM701.24 384.88h5.00v14.52h-5.00zM707.72 329.17h5.00v59.90h-5.00zM714.21 345.93h5.00v38.96h-5.00zM720.69 370.08h5.00v24.85h-5.00zM727.17 388.93h5.00v7.82h-5.00zM733.66 371.90h5.00v21.08h-5.00zM740.14 376.78h5.00v18.57h-5.00zM746.62 349.56h5.00v34.91h-5.00zM753.11 360.03h5.00v26.25h-5.00zM759.59 363.94h5.00v26.11h-5.00zM766.07 382.65h5.00v15.36h-5.00zM772.56 387.53h5.00v13.40h-5.00zM779.04 383.90h5.00v12.71h-5.00zM785.52 389.07h5.00v11.87h-5.00zM792.01 385.02h5.00v10.75h-5.00zM798.49 388.79h5.00v14.10h-5.00zM804.97 379.86h5.00v16.48h-5.00zM811.46 384.74h5.00v15.08h-5.00zM817.94 383.76h5.00v14.94h-5.00zM824.42 384.88h5.00v11.87h-5.00zM830.91 392.98h5.00v6.98h-5.00zM837.39 385.72h5.00v12.43h-5.00zM843.87 376.78h5.00v18.15h-5.00zM850.36 377.06h5.00v18.99h-5.00zM856.84 382.09h5.00v16.34h-5.00zM863.32 382.09h5.00v17.31h-5.00zM869.81 387.12h5.00v11.03h-5.00zM876.29 383.76h5.00v15.50h-5.00zM882.77 389.91h5.00v9.22h-5.00zM889.26 384.04h5.00v14.80h-5.00zM895.74 384.04h5.00v16.20h-5.00zM902.22 387.12h5.00v12.57h-5.00zM908.71 384.18h5.00v11.17h-5.00zM915.19 385.44h5.00v11.45h-5.00zM921.67 378.04h5.00v16.89h-5.00zM928.16 386.00h5.00v12.71h-5.00zM934.64 388.93h5.00v12.99h-5.00zM941.12 383.90h5.00v14.94h-5.00zM947.61 382.93h5.00v12.43h-5.00zM954.09 386.70h5.00v13.96h-5.00zM960.57 390.33h5.00v10.61h-5.00zM967.05 379.02h5.00v12.99h-5.00zM973.54 387.95h5.00v13.96h-5.00zM980.02 389.91h5.00v11.31h-5.00zM986.50 381.11h5.00v12.85h-5.00zM992.99 361.01h5.00v31.97h-5.00zM999.47 380.13h5.00v15.22h-5.00zM1005.95 384.18h5.00v14.24h-5.00zM1012.44 367.43h5.00v24.99h-5.00zM1018.92 382.93h5.00v15.92h-5.00zM1025.40 380.97h5.00v15.78h-5.00zM1031.89 387.81h5.00v15.36h-5.00zM1038.37 370.92h5.00v19.41h-5.00zM1044.85 386.84h5.00v13.12h-5.00zM1051.34 387.39h5.00v15.64h-5.00zM1057.82 376.09h5.00v23.74h-5.00zM1064.30 392.14h5.00v11.73h-5.00zM1070.79 366.45h5.00v26.11h-5.00zM1077.27 380.97h5.00v15.22h-5.00zM1083.75 378.32h5.00v21.64h-5.00zM1090.24 383.35h5.00v14.10h-5.00zM1096.72 381.25h5.00v18.71h-5.00zM1103.20 397.03h5.00v6.98h-5.00zM1109.69 399.12h5.00v6.98h-5.00zM1116.17 401.22h5.00v3.77h-5.00zM1122.65 394.10h5.00v7.96h-5.00zM1129.14 386.14h5.00v18.99h-5.00zM1135.62 390.89h5.00v11.73h-5.00zM1142.10 397.03h5.00v5.59h-5.00zM1148.59 397.45h5.00v6.98h-5.00zM1155.07 395.07h5.00v6.98h-5.00zM1161.55 392.00h5.00v10.33h-5.00zM1168.04 389.63h5.00v8.10h-5.00zM1174.52 397.03h5.00v6.84h-5.00zM1181.00 398.70h5.00v4.75h-5.00zM1187.49 389.35h5.00v13.82h-5.00zM1193.97 396.33h5.00v5.86h-5.00zM1200.45 399.96h5.00v4.89h-5.00zM1206.94 398.01h5.00v6.14h-5.00zM1213.42 393.12h5.00v6.84h-5.00zM1219.90 382.65h5.00v16.62h-5.00zM1226.39 388.09h5.00v15.36h-5.00zM1232.87 396.75h5.00v6.42h-5.00zM1239.35 391.44h5.00v13.54h-5.00zM1245.84 396.89h5.00v6.98h-5.00zM1252.32 392.42h5.00v5.72h-5.00zM1258.80 391.72h5.00v9.91h-5.00zM1265.29 392.98h5.00v8.52h-5.00zM1271.77 397.17h5.00v5.86h-5.00zM1278.25 394.93h5.00v6.70h-5.00zM1284.74 396.33h5.00v5.86h-5.00zM1291.22 396.05h5.00v7.96h-5.00zM1297.70 400.80h5.00v4.19h-5.00zM1304.19 366.03h5.00v31.00h-5.00zM1310.67 396.75h5.00v7.40h-5.00zM1317.15 385.02h5.00v13.26h-5.00zM1323.64 383.90h5.00v17.03h-5.00zM1330.12 390.05h5.00v11.45h-5.00zM1336.60 393.82h5.00v9.08h-5.00zM1343.09 385.58h5.00v12.71h-5.00zM1349.57 390.47h5.00v10.33h-5.00zM1356.05 391.03h5.00v12.29h-5.00zM1362.54 391.16h5.00v10.89h-5.00zM1369.02 394.24h5.00v12.71h-5.00zM1375.50 347.60h5.00v39.10h-5.00zM1381.99 344.95h5.00v43.84h-5.00zM1388.47 396.05h5.00v6.56h-5.00zM1394.95 387.53h5.00v8.66h-5.00zM1401.44 396.61h5.00v9.08h-5.00zM1407.92 368.27h5.00v29.88h-5.00zM1414.40 391.16h5.00v10.05h-5.00zM1420.89 382.51h5.00v18.71h-5.00zM1427.37 342.02h5.00v43.42h-5.00zM1433.85 330.43h5.00v49.57h-5.00zM1440.34 341.18h5.00v30.58h-5.00zM1446.82 348.30h5.00v29.88h-5.00zM1453.30 375.11h5.00v19.97h-5.00zM1459.79 360.17h5.00v37.00h-5.00zM1466.27 382.23h5.00v18.43h-5.00zM1472.75 371.20h5.00v19.83h-5.00zM1479.24 373.15h5.00v26.39h-5.00zM1485.72 367.99h5.00v30.02h-5.00zM1492.20 360.31h5.00v35.74h-5.00zM1498.69 371.20h5.00v24.99h-5.00zM1505.17 342.16h5.00v48.03h-5.00zM1511.65 347.18h5.00v39.93h-5.00zM1518.14 347.18h5.00v35.74h-5.00zM1524.62 352.63h5.00v36.86h-5.00zM1531.10 355.84h5.00v35.60h-5.00zM1537.59 337.69h5.00v50.68h-5.00zM1544.07 342.30h5.00v43.70h-5.00zM1550.55 336.01h5.00v50.40h-5.00zM1557.04 315.49h5.00v67.72h-5.00zM1563.52 352.21h5.00v35.88h-5.00zM1570.00 350.25h5.00v43.00h-5.00zM1576.49 385.72h5.00v25.27h-5.00z" fill="#11b562"/><path d="M642.89 391.44h5.00v53.76h-5.00zM649.37 383.76h5.00v59.34h-5.00zM655.86 383.76h5.00v61.44h-5.00zM662.34 398.43h5.00v46.77h-5.00zM668.82 391.44h5.00v53.76h-5.00zM675.31 398.15h5.00v47.05h-5.00zM681.79 397.31h5.00v47.05h-5.00zM688.27 400.24h5.00v44.96h-5.00zM694.76 396.05h5.00v49.15h-5.00zM701.24 399.40h5.00v44.96h-5.00zM707.72 389.07h5.00v56.13h-5.00zM714.21 384.88h5.00v59.48h-5.00zM720.69 394.93h5.00v49.15h-5.00zM727.17 396.75h5.00v48.45h-5.00zM733.66 392.98h5.00v52.22h-5.00zM740.14 395.35h5.00v48.17h-5.00zM746.62 384.46h5.00v59.06h-5.00zM753.11 386.28h5.00v58.22h-5.00zM759.59 390.05h5.00v54.59h-5.00zM766.07 398.01h5.00v47.19h-5.00zM772.56 400.94h5.00v44.26h-5.00zM779.04 396.61h5.00v48.03h-5.00zM785.52 400.94h5.00v43.70h-5.00zM792.01 395.77h5.00v49.43h-5.00zM798.49 402.89h5.00v41.61h-5.00zM804.97 396.33h5.00v48.87h-5.00zM811.46 399.82h5.00v45.38h-5.00zM817.94 398.70h5.00v46.50h-5.00zM824.42 396.75h5.00v48.45h-5.00zM830.91 399.96h5.00v45.24h-5.00zM837.39 398.15h5.00v47.05h-5.00zM843.87 394.93h5.00v50.27h-5.00zM850.36 396.05h5.00v49.15h-5.00zM856.84 398.43h5.00v46.77h-5.00zM863.32 399.40h5.00v45.10h-5.00zM869.81 398.15h5.00v47.05h-5.00zM876.29 399.26h5.00v45.10h-5.00zM882.77 399.12h5.00v46.08h-5.00zM889.26 398.84h5.00v46.36h-5.00zM895.74 400.24h5.00v44.96h-5.00zM902.22 399.68h5.00v44.96h-5.00zM908.71 395.35h5.00v49.85h-5.00zM915.19 396.89h5.00v47.47h-5.00zM921.67 394.93h5.00v48.87h-5.00zM928.16 398.70h5.00v46.50h-5.00zM934.64 401.92h5.00v43.28h-5.00zM941.12 398.84h5.00v45.66h-5.00zM947.61 395.35h5.00v48.87h-5.00zM954.09 400.66h5.00v43.70h-5.00zM960.57 400.94h5.00v44.26h-5.00zM967.05 392.00h5.00v53.20h-5.00zM973.54 401.92h5.00v42.17h-5.00zM980.02 401.22h5.00v43.98h-5.00zM986.50 393.96h5.00v50.27h-5.00zM992.99 392.98h5.00v52.22h-5.00zM999.47 395.35h5.00v49.85h-5.00zM1005.95 398.43h5.00v46.77h-5.00zM1012.44 392.42h5.00v51.94h-5.00zM1018.92 398.84h5.00v46.36h-5.00zM1025.40 396.75h5.00v48.45h-5.00zM1031.89 403.17h5.00v41.47h-5.00zM1038.37 390.33h5.00v47.89h-5.00zM1044.85 399.96h5.00v45.24h-5.00zM1051.34 403.03h5.00v42.17h-5.00zM1057.82 399.82h5.00v44.82h-5.00zM1064.30 403.87h5.00v41.33h-5.00zM1070.79 392.56h5.00v51.94h-5.00zM1077.27 396.19h5.00v49.01h-5.00zM1083.75 399.96h5.00v45.24h-5.00zM1090.24 397.45h5.00v47.75h-5.00zM1096.72 399.96h5.00v45.24h-5.00zM1103.20 404.01h5.00v41.19h-5.00zM1109.69 406.10h5.00v39.10h-5.00zM1116.17 404.99h5.00v40.21h-5.00zM1122.65 402.06h5.00v43.14h-5.00zM1129.14 405.13h5.00v39.51h-5.00zM1135.62 402.61h5.00v42.03h-5.00zM1142.10 402.61h5.00v42.59h-5.00zM1148.59 404.43h5.00v40.77h-5.00zM1155.07 402.06h5.00v43.14h-5.00zM1161.55 402.33h5.00v42.87h-5.00zM1168.04 397.73h5.00v47.47h-5.00zM1174.52 403.87h5.00v40.77h-5.00zM1181.00 403.45h5.00v41.75h-5.00zM1187.49 403.17h5.00v41.47h-5.00zM1193.97 402.20h5.00v42.03h-5.00zM1200.45 404.85h5.00v40.35h-5.00zM1206.94 404.15h5.00v41.05h-5.00zM1213.42 399.96h5.00v44.68h-5.00zM1219.90 399.26h5.00v45.94h-5.00zM1226.39 403.45h5.00v41.05h-5.00zM1232.87 403.17h5.00v42.03h-5.00zM1239.35 404.99h5.00v40.21h-5.00zM1245.84 403.87h5.00v41.33h-5.00zM1252.32 398.15h5.00v47.05h-5.00zM1258.80 401.64h5.00v43.56h-5.00zM1265.29 401.50h5.00v43.00h-5.00zM1271.77 403.03h5.00v42.17h-5.00zM1278.25 401.64h5.00v43.56h-5.00zM1284.74 402.20h5.00v43.00h-5.00zM1291.22 404.01h5.00v40.49h-5.00zM1297.70 404.99h5.00v40.21h-5.00zM1304.19 397.03h5.00v46.77h-5.00zM1310.67 404.15h5.00v41.05h-5.00zM1317.15 398.29h5.00v46.91h-5.00zM1323.64 400.94h5.00v43.56h-5.00zM1330.12 401.50h5.00v43.14h-5.00zM1336.60 402.89h5.00v41.61h-5.00zM1343.09 398.29h5.00v46.08h-5.00zM1349.57 400.80h5.00v43.70h-5.00zM1356.05 403.31h5.00v41.89h-5.00zM1362.54 402.06h5.00v42.45h-5.00zM1369.02 406.94h5.00v38.26h-5.00zM1375.50 386.70h5.00v54.59h-5.00zM1381.99 388.79h5.00v55.29h-5.00zM1388.47 402.61h5.00v42.59h-5.00zM1394.95 396.19h5.00v49.01h-5.00zM1401.44 405.69h5.00v38.96h-5.00zM1407.92 398.15h5.00v46.50h-5.00zM1414.40 401.22h5.00v43.98h-5.00zM1420.89 401.22h5.00v42.87h-5.00zM1427.37 385.44h5.00v58.64h-5.00zM1433.85 379.99h5.00v65.21h-5.00zM1440.34 371.76h5.00v72.33h-5.00zM1446.82 378.18h5.00v67.02h-5.00zM1453.30 395.07h5.00v50.13h-5.00zM1459.79 397.17h5.00v46.91h-5.00zM1466.27 400.66h5.00v44.54h-5.00zM1472.75 391.03h5.00v52.22h-5.00zM1479.24 399.54h5.00v44.54h-5.00zM1485.72 398.01h5.00v46.64h-5.00zM1492.20 396.05h5.00v48.59h-5.00zM1498.69 396.19h5.00v48.45h-5.00zM1505.17 390.19h5.00v49.43h-5.00zM1511.65 387.12h5.00v58.08h-5.00zM1518.14 382.93h5.00v62.27h-5.00zM1524.62 389.49h5.00v54.31h-5.00zM1531.10 391.44h5.00v53.76h-5.00zM1537.59 388.37h5.00v56.83h-5.00zM1544.07 386.00h5.00v52.92h-5.00zM1550.55 386.42h5.00v58.22h-5.00zM1557.04 383.21h5.00v61.99h-5.00zM1563.52 388.09h5.00v54.31h-5.00zM1570.00 393.26h5.00v51.94h-5.00zM1576.49 410.99h5.00v34.21h-5.00z" fill="#832e22"/><path d="M662.34 397.48h5.00v1.12h-5.00zM668.82 390.02h5.00v1.68h-5.00zM701.24 398.22h5.00v1.40h-5.00zM707.72 387.53h5.00v1.82h-5.00zM740.14 394.40h5.00v1.12h-5.00zM746.62 383.16h5.00v1.54h-5.00zM779.04 395.54h5.00v1.26h-5.00zM785.52 399.99h5.00v1.12h-5.00zM817.94 397.64h5.00v1.26h-5.00zM824.42 395.33h5.00v1.68h-5.00zM856.84 397.36h5.00v1.26h-5.00zM863.32 397.74h5.00v1.95h-5.00zM895.74 399.29h5.00v1.12h-5.00zM902.22 398.38h5.00v1.54h-5.00zM921.67 394.22h5.00v0.84h-5.00zM928.16 397.76h5.00v1.12h-5.00zM934.64 400.97h5.00v1.12h-5.00zM941.12 397.42h5.00v1.68h-5.00zM973.54 400.97h5.00v1.12h-5.00zM980.02 399.79h5.00v1.68h-5.00zM1012.44 391.59h5.00v0.98h-5.00zM1018.92 397.89h5.00v1.12h-5.00zM1025.40 395.92h5.00v0.98h-5.00zM1051.34 402.20h5.00v0.98h-5.00zM1057.82 398.87h5.00v1.12h-5.00zM1064.30 402.92h5.00v1.12h-5.00zM1090.24 396.50h5.00v1.12h-5.00zM1096.72 398.89h5.00v1.26h-5.00zM1129.14 404.18h5.00v1.12h-5.00zM1135.62 401.43h5.00v1.40h-5.00zM1142.10 401.66h5.00v1.12h-5.00zM1168.04 396.54h5.00v1.40h-5.00zM1174.52 402.45h5.00v1.68h-5.00zM1206.94 403.08h5.00v1.26h-5.00zM1213.42 398.54h5.00v1.68h-5.00zM1245.84 402.45h5.00v1.68h-5.00zM1252.32 397.20h5.00v1.12h-5.00zM1258.80 400.81h5.00v0.98h-5.00zM1284.74 401.25h5.00v1.12h-5.00zM1291.22 402.59h5.00v1.68h-5.00zM1297.70 404.16h5.00v0.98h-5.00zM1304.19 396.20h5.00v0.98h-5.00zM1323.64 400.11h5.00v0.98h-5.00zM1330.12 399.60h5.00v2.23h-5.00zM1336.60 401.71h5.00v1.40h-5.00zM1362.54 400.75h5.00v1.54h-5.00zM1369.02 405.64h5.00v1.54h-5.00zM1375.50 385.39h5.00v1.54h-5.00zM1401.44 404.62h5.00v1.26h-5.00zM1407.92 392.45h5.00v6.70h-5.00zM1414.40 400.27h5.00v1.12h-5.00zM1440.34 370.69h5.00v1.26h-5.00zM1446.82 377.23h5.00v1.12h-5.00zM1453.30 394.24h5.00v0.98h-5.00zM1479.24 398.47h5.00v1.26h-5.00zM1485.72 396.70h5.00v1.54h-5.00zM1492.20 395.22h5.00v0.98h-5.00zM1518.14 381.86h5.00v1.26h-5.00zM1524.62 388.42h5.00v1.26h-5.00zM1531.10 390.49h5.00v1.12h-5.00zM1557.04 382.02h5.00v1.40h-5.00zM1563.52 387.02h5.00v1.26h-5.00zM1570.00 392.31h5.00v1.12h-5.00z" fill="#3e5fae"/><path d="M649.37 443.11h5.00v2.09h-5.00zM681.79 444.36h5.00v0.84h-5.00zM701.24 444.36h5.00v0.84h-5.00zM714.21 444.36h5.00v0.84h-5.00zM720.69 444.08h5.00v1.12h-5.00zM740.14 443.52h5.00v1.68h-5.00zM746.62 443.52h5.00v1.68h-5.00zM753.11 444.50h5.00v0.70h-5.00zM759.59 444.64h5.00v0.56h-5.00zM779.04 444.64h5.00v0.56h-5.00zM785.52 444.64h5.00v0.56h-5.00zM798.49 444.50h5.00v0.70h-5.00zM863.32 444.50h5.00v0.70h-5.00zM876.29 444.36h5.00v0.84h-5.00zM902.22 444.64h5.00v0.56h-5.00zM915.19 444.36h5.00v0.84h-5.00zM921.67 443.80h5.00v1.40h-5.00zM941.12 444.50h5.00v0.70h-5.00zM947.61 444.22h5.00v0.98h-5.00zM954.09 444.36h5.00v0.84h-5.00zM973.54 444.08h5.00v1.12h-5.00zM986.50 444.22h5.00v0.98h-5.00zM1012.44 444.36h5.00v0.84h-5.00zM1031.89 444.64h5.00v0.56h-5.00zM1038.37 438.22h5.00v6.98h-5.00zM1057.82 444.64h5.00v0.56h-5.00zM1070.79 444.50h5.00v0.70h-5.00zM1129.14 444.64h5.00v0.56h-5.00zM1135.62 444.64h5.00v0.56h-5.00zM1174.52 444.64h5.00v0.56h-5.00zM1187.49 444.64h5.00v0.56h-5.00zM1193.97 444.22h5.00v0.98h-5.00zM1213.42 444.64h5.00v0.56h-5.00zM1226.39 444.50h5.00v0.70h-5.00zM1265.29 444.50h5.00v0.70h-5.00zM1291.22 444.50h5.00v0.70h-5.00zM1304.19 443.80h5.00v1.40h-5.00zM1323.64 444.50h5.00v0.70h-5.00zM1330.12 444.64h5.00v0.56h-5.00zM1336.60 444.50h5.00v0.70h-5.00zM1343.09 444.36h5.00v0.84h-5.00zM1349.57 444.50h5.00v0.70h-5.00zM1362.54 444.50h5.00v0.70h-5.00zM1375.50 441.29h5.00v3.91h-5.00zM1381.99 444.08h5.00v1.12h-5.00zM1401.44 444.64h5.00v0.56h-5.00zM1407.92 444.64h5.00v0.56h-5.00zM1420.89 444.08h5.00v1.12h-5.00zM1427.37 444.08h5.00v1.12h-5.00zM1440.34 444.08h5.00v1.12h-5.00zM1459.79 444.08h5.00v1.12h-5.00zM1472.75 443.25h5.00v1.95h-5.00zM1479.24 444.08h5.00v1.12h-5.00zM1485.72 444.64h5.00v0.56h-5.00zM1492.20 444.64h5.00v0.56h-5.00zM1498.69 444.64h5.00v0.56h-5.00zM1505.17 439.61h5.00v5.59h-5.00zM1524.62 443.80h5.00v1.40h-5.00zM1544.07 438.92h5.00v6.28h-5.00zM1550.55 444.64h5.00v0.56h-5.00zM1563.52 442.41h5.00v2.79h-5.00z" fill="#a0a3a5"/></g></svg>
<div class="ax" style="right:956px;top:197px">0</div>
<div class="ax" style="right:956px;top:166px">200</div>
<div class="ax" style="right:956px;top:134px">400</div>
<div class="ax" style="right:956px;top:103px">600</div>
<div class="ax" style="right:956px;top:71px">800</div>
<div class="ax" style="left:45px;top:215px">20:00</div>
<div class="ax" style="left:84px;top:215px">21:00</div>
<div class="ax" style="left:123px;top:215px">22:00</div>
<div class="ax" style="left:162px;top:215px">23:00</div>
<div class="ax" style="left:201px;top:215px">00:00</div>
<div class="ax" style="left:240px;top:215px">01:00</div>
<div class="ax" style="left:279px;top:215px">02:00</div>
<div class="ax" style="left:318px;top:215px">03:00</div>
<div class="ax" style="left:357px;top:215px">04:00</div>
<div class="ax" style="left:396px;top:215px">05:00</div>
<div class="ax" style="left:434px;top:215px">06:00</div>
<div class="ax" style="left:473px;top:215px">07:00</div>
<div class="ax" style="left:512px;top:215px">08:00</div>
<div class="ax" style="left:551px;top:215px">09:00</div>
<div class="ax" style="left:590px;top:215px">10:00</div>
<div class="ax" style="left:629px;top:215px">11:00</div>
<div class="ax" style="left:668px;top:215px">12:00</div>
<div class="ax" style="left:707px;top:215px">13:00</div>
<div class="ax" style="left:746px;top:215px">14:00</div>
<div class="ax" style="left:785px;top:215px">15:00</div>
<div class="ax" style="left:824px;top:215px">16:00</div>
<div class="ax" style="left:863px;top:215px">17:00</div>
<div class="ax" style="left:902px;top:215px">18:00</div>
<div class="ax" style="left:941px;top:215px">19:00</div>
</div>
<div class="box" style="left:245px;top:463px;width:990px;height:243px"><div class="bh" style="height:41px"><span style="top:0px;left:8.95px;letter-spacing:0.386px">Client activity</span></div>
<svg style="left:962.500px;top:11.6px" width="15" height="15" viewBox="0 0 15 15"><circle cx="7.500" cy="7.500" r="7.400" fill="#d2d8de"/><circle cx="7.500" cy="4.300" r="1.050" fill="#23272b"/><path d="M6.100 6.500h2.100v4M6 10.700h3.200" fill="none" stroke="#23272b" stroke-width="1.300"/></svg>
<svg style="left:-1px;top:-2px" width="990" height="244" viewBox="600 504 990 244" shape-rendering="crispEdges"><path d="M661.5 567.0V716.7M700.5 567.0V716.7M739.5 567.0V716.7M777.5 567.0V716.7M816.5 567.0V716.7M855.5 567.0V716.7M894.5 567.0V716.7M933.5 567.0V716.7M972.5 567.0V716.7M1011.5 567.0V716.7M1050.5 567.0V716.7M1089.5 567.0V716.7M1128.5 567.0V716.7M1167.5 567.0V716.7M1206.5 567.0V716.7M1244.5 567.0V716.7M1283.5 567.0V716.7M1322.5 567.0V716.7M1361.5 567.0V716.7M1400.5 567.0V716.7M1439.5 567.0V716.7M1478.5 567.0V716.7M1517.5 567.0V716.7M1556.5 567.0V716.7" stroke="rgba(255,255,255,.26)" stroke-width="1" fill="none"/><path d="M637.0 708.5H1579.0M637.0 677.5H1579.0M637.0 645.5H1579.0M637.0 614.5H1579.0M637.0 582.5H1579.0" stroke="rgba(255,255,255,.26)" stroke-width="1" fill="none"/><clipPath id="cp504"><rect x="645.0" y="544" width="934.0" height="200"/></clipPath><g clip-path="url(#cp504)" shape-rendering="auto"><path d="M642.89 624.01h5.00v84.19h-5.00zM649.37 599.29h5.00v108.91h-5.00zM655.86 614.93h5.00v93.27h-5.00zM662.34 636.71h5.00v71.49h-5.00zM668.82 625.12h5.00v83.08h-5.00zM675.31 643.69h5.00v64.51h-5.00zM681.79 640.62h5.00v67.58h-5.00zM688.27 642.86h5.00v65.34h-5.00zM694.76 637.13h5.00v71.07h-5.00zM701.24 647.88h5.00v60.32h-5.00zM707.72 592.17h5.00v116.03h-5.00zM714.21 608.93h5.00v99.27h-5.00zM720.69 633.08h5.00v75.12h-5.00zM727.17 651.93h5.00v56.27h-5.00zM733.66 634.90h5.00v73.30h-5.00zM740.14 639.78h5.00v68.42h-5.00zM746.62 612.56h5.00v95.64h-5.00zM753.11 623.03h5.00v85.17h-5.00zM759.59 626.94h5.00v81.26h-5.00zM766.07 645.65h5.00v62.55h-5.00zM772.56 650.53h5.00v57.67h-5.00zM779.04 646.90h5.00v61.30h-5.00zM785.52 652.07h5.00v56.13h-5.00zM792.01 648.02h5.00v60.18h-5.00zM798.49 651.79h5.00v56.41h-5.00zM804.97 642.86h5.00v65.34h-5.00zM811.46 647.74h5.00v60.46h-5.00zM817.94 646.76h5.00v61.44h-5.00zM824.42 647.88h5.00v60.32h-5.00zM830.91 655.98h5.00v52.22h-5.00zM837.39 648.72h5.00v59.48h-5.00zM843.87 639.78h5.00v68.42h-5.00zM850.36 640.06h5.00v68.14h-5.00zM856.84 645.09h5.00v63.11h-5.00zM863.32 645.09h5.00v63.11h-5.00zM869.81 650.12h5.00v58.08h-5.00zM876.29 646.76h5.00v61.44h-5.00zM882.77 652.91h5.00v55.29h-5.00zM889.26 647.04h5.00v61.16h-5.00zM895.74 647.04h5.00v61.16h-5.00zM902.22 650.12h5.00v58.08h-5.00zM908.71 647.18h5.00v61.02h-5.00zM915.19 648.44h5.00v59.76h-5.00zM921.67 641.04h5.00v67.16h-5.00zM928.16 649.00h5.00v59.20h-5.00zM934.64 651.93h5.00v56.27h-5.00zM941.12 646.90h5.00v61.30h-5.00zM947.61 645.93h5.00v62.27h-5.00zM954.09 649.70h5.00v58.50h-5.00zM960.57 653.33h5.00v54.87h-5.00zM967.05 642.02h5.00v66.18h-5.00zM973.54 650.95h5.00v57.25h-5.00zM980.02 652.91h5.00v55.29h-5.00zM986.50 644.11h5.00v64.09h-5.00zM992.99 624.01h5.00v84.19h-5.00zM999.47 643.13h5.00v65.07h-5.00zM1005.95 647.18h5.00v61.02h-5.00zM1012.44 630.43h5.00v77.77h-5.00zM1018.92 645.93h5.00v62.27h-5.00zM1025.40 643.97h5.00v64.23h-5.00zM1031.89 650.81h5.00v57.39h-5.00zM1038.37 633.92h5.00v74.28h-5.00zM1044.85 649.84h5.00v58.36h-5.00zM1051.34 650.39h5.00v57.81h-5.00zM1057.82 639.09h5.00v69.11h-5.00zM1064.30 655.14h5.00v53.06h-5.00zM1070.79 629.45h5.00v78.75h-5.00zM1077.27 643.97h5.00v64.23h-5.00zM1083.75 641.32h5.00v66.88h-5.00zM1090.24 646.35h5.00v61.85h-5.00zM1096.72 644.25h5.00v63.95h-5.00zM1103.20 660.03h5.00v48.17h-5.00zM1109.69 662.12h5.00v46.08h-5.00zM1116.17 664.22h5.00v43.98h-5.00zM1122.65 657.10h5.00v51.10h-5.00zM1129.14 649.14h5.00v59.06h-5.00zM1135.62 653.89h5.00v54.31h-5.00zM1142.10 660.03h5.00v48.17h-5.00zM1148.59 660.45h5.00v47.75h-5.00zM1155.07 658.07h5.00v50.13h-5.00zM1161.55 655.00h5.00v53.20h-5.00zM1168.04 652.63h5.00v55.57h-5.00zM1174.52 660.03h5.00v48.17h-5.00zM1181.00 661.70h5.00v46.50h-5.00zM1187.49 652.35h5.00v55.85h-5.00zM1193.97 659.33h5.00v48.87h-5.00zM1200.45 662.96h5.00v45.24h-5.00zM1206.94 661.01h5.00v47.19h-5.00zM1213.42 656.12h5.00v52.08h-5.00zM1219.90 645.65h5.00v62.55h-5.00zM1226.39 651.09h5.00v57.11h-5.00zM1232.87 659.75h5.00v48.45h-5.00zM1239.35 654.44h5.00v53.76h-5.00zM1245.84 659.89h5.00v48.31h-5.00zM1252.32 655.42h5.00v52.78h-5.00zM1258.80 654.72h5.00v53.48h-5.00zM1265.29 655.98h5.00v52.22h-5.00zM1271.77 660.17h5.00v48.03h-5.00zM1278.25 657.93h5.00v50.27h-5.00zM1284.74 659.33h5.00v48.87h-5.00zM1291.22 659.05h5.00v49.15h-5.00zM1297.70 663.80h5.00v44.40h-5.00zM1304.19 629.03h5.00v79.17h-5.00zM1310.67 659.75h5.00v48.45h-5.00zM1317.15 648.02h5.00v60.18h-5.00zM1323.64 646.90h5.00v61.30h-5.00zM1330.12 653.05h5.00v55.15h-5.00zM1336.60 656.82h5.00v51.38h-5.00zM1343.09 648.58h5.00v59.62h-5.00zM1349.57 653.47h5.00v54.73h-5.00zM1356.05 654.03h5.00v54.17h-5.00zM1362.54 654.16h5.00v54.04h-5.00zM1369.02 657.24h5.00v50.96h-5.00zM1375.50 610.60h5.00v97.60h-5.00zM1381.99 607.95h5.00v100.25h-5.00zM1388.47 659.05h5.00v49.15h-5.00zM1394.95 650.53h5.00v57.67h-5.00zM1401.44 659.61h5.00v48.59h-5.00zM1407.92 631.27h5.00v76.93h-5.00zM1414.40 654.16h5.00v54.04h-5.00zM1420.89 645.51h5.00v62.69h-5.00zM1427.37 605.02h5.00v103.18h-5.00zM1433.85 593.43h5.00v114.77h-5.00zM1440.34 604.18h5.00v104.02h-5.00zM1446.82 611.30h5.00v96.90h-5.00zM1453.30 638.11h5.00v70.09h-5.00zM1459.79 623.17h5.00v85.03h-5.00zM1466.27 645.23h5.00v62.97h-5.00zM1472.75 634.20h5.00v74.00h-5.00zM1479.24 636.15h5.00v72.05h-5.00zM1485.72 630.99h5.00v77.21h-5.00zM1492.20 623.31h5.00v84.89h-5.00zM1498.69 634.20h5.00v74.00h-5.00zM1505.17 605.16h5.00v103.04h-5.00zM1511.65 610.18h5.00v98.02h-5.00zM1518.14 610.18h5.00v98.02h-5.00zM1524.62 615.63h5.00v92.57h-5.00zM1531.10 618.84h5.00v89.36h-5.00zM1537.59 600.69h5.00v107.51h-5.00zM1544.07 605.30h5.00v102.90h-5.00zM1550.55 599.01h5.00v109.19h-5.00zM1557.04 578.49h5.00v129.71h-5.00zM1563.52 615.21h5.00v92.99h-5.00zM1570.00 613.25h5.00v94.95h-5.00zM1576.49 648.72h5.00v59.48h-5.00z" fill="#f56954"/><path d="M668.82 625.12h5.00v1.60h-5.00zM707.72 592.17h5.00v1.60h-5.00zM746.62 612.56h5.00v1.54h-5.00zM785.52 652.07h5.00v1.12h-5.00zM824.42 647.88h5.00v1.60h-5.00zM863.32 645.09h5.00v1.60h-5.00zM902.22 650.12h5.00v1.54h-5.00zM921.67 641.04h5.00v0.84h-5.00zM928.16 649.00h5.00v1.12h-5.00zM941.12 646.90h5.00v1.60h-5.00zM980.02 652.91h5.00v1.60h-5.00zM1018.92 645.93h5.00v1.12h-5.00zM1025.40 643.97h5.00v0.98h-5.00zM1057.82 639.09h5.00v1.12h-5.00zM1064.30 655.14h5.00v1.12h-5.00zM1096.72 644.25h5.00v1.26h-5.00zM1135.62 653.89h5.00v1.40h-5.00zM1142.10 660.03h5.00v1.12h-5.00zM1174.52 660.03h5.00v1.60h-5.00zM1213.42 656.12h5.00v1.60h-5.00zM1252.32 655.42h5.00v1.12h-5.00zM1258.80 654.72h5.00v0.98h-5.00zM1291.22 659.05h5.00v1.60h-5.00zM1297.70 663.80h5.00v0.98h-5.00zM1330.12 653.05h5.00v1.60h-5.00zM1336.60 656.82h5.00v1.40h-5.00zM1369.02 657.24h5.00v1.54h-5.00zM1375.50 610.60h5.00v1.54h-5.00zM1407.92 631.27h5.00v6.70h-5.00zM1414.40 654.16h5.00v1.12h-5.00zM1446.82 611.30h5.00v1.12h-5.00zM1453.30 638.11h5.00v0.98h-5.00zM1485.72 630.99h5.00v1.54h-5.00zM1492.20 623.31h5.00v0.98h-5.00zM1524.62 615.63h5.00v1.26h-5.00zM1531.10 618.84h5.00v1.12h-5.00zM1563.52 615.21h5.00v1.26h-5.00zM1570.00 613.25h5.00v1.12h-5.00z" fill="#3c8dbc"/><path d="M662.34 636.71h5.00v1.12h-5.00zM701.24 647.88h5.00v1.40h-5.00zM740.14 639.78h5.00v1.12h-5.00zM779.04 646.90h5.00v1.26h-5.00zM817.94 646.76h5.00v1.26h-5.00zM856.84 645.09h5.00v1.26h-5.00zM895.74 647.04h5.00v1.12h-5.00zM934.64 651.93h5.00v1.12h-5.00zM973.54 650.95h5.00v1.12h-5.00zM1012.44 630.43h5.00v0.98h-5.00zM1051.34 650.39h5.00v0.98h-5.00zM1090.24 646.35h5.00v1.12h-5.00zM1129.14 649.14h5.00v1.12h-5.00zM1168.04 652.63h5.00v1.40h-5.00zM1206.94 661.01h5.00v1.26h-5.00zM1245.84 659.89h5.00v1.60h-5.00zM1284.74 659.33h5.00v1.12h-5.00zM1304.19 629.03h5.00v0.98h-5.00zM1323.64 646.90h5.00v0.98h-5.00zM1362.54 654.16h5.00v1.54h-5.00zM1401.44 659.61h5.00v1.26h-5.00zM1440.34 604.18h5.00v1.26h-5.00zM1479.24 636.15h5.00v1.26h-5.00zM1518.14 610.18h5.00v1.26h-5.00zM1557.04 578.49h5.00v1.40h-5.00z" fill="#00a65a"/></g></svg>
<div class="ax" style="right:956px;top:196px">0</div>
<div class="ax" style="right:956px;top:165px">200</div>
<div class="ax" style="right:956px;top:133px">400</div>
<div class="ax" style="right:956px;top:102px">600</div>
<div class="ax" style="right:956px;top:70px">800</div>
<div class="ax" style="left:45px;top:214px">20:00</div>
<div class="ax" style="left:84px;top:214px">21:00</div>
<div class="ax" style="left:123px;top:214px">22:00</div>
<div class="ax" style="left:162px;top:214px">23:00</div>
<div class="ax" style="left:201px;top:214px">00:00</div>
<div class="ax" style="left:240px;top:214px">01:00</div>
<div class="ax" style="left:279px;top:214px">02:00</div>
<div class="ax" style="left:318px;top:214px">03:00</div>
<div class="ax" style="left:357px;top:214px">04:00</div>
<div class="ax" style="left:396px;top:214px">05:00</div>
<div class="ax" style="left:434px;top:214px">06:00</div>
<div class="ax" style="left:473px;top:214px">07:00</div>
<div class="ax" style="left:512px;top:214px">08:00</div>
<div class="ax" style="left:551px;top:214px">09:00</div>
<div class="ax" style="left:590px;top:214px">10:00</div>
<div class="ax" style="left:629px;top:214px">11:00</div>
<div class="ax" style="left:668px;top:214px">12:00</div>
<div class="ax" style="left:707px;top:214px">13:00</div>
<div class="ax" style="left:746px;top:214px">14:00</div>
<div class="ax" style="left:785px;top:214px">15:00</div>
<div class="ax" style="left:824px;top:214px">16:00</div>
<div class="ax" style="left:863px;top:214px">17:00</div>
<div class="ax" style="left:902px;top:214px">18:00</div>
<div class="ax" style="left:941px;top:214px">19:00</div>
</div>
<div class="box" style="left:245px;top:726px;width:480px;height:293px"><div class="bh"><span style="left:9.35px;letter-spacing:-0.040px">Query Types</span></div>
<svg style="left:-1px;top:-1px" width="480" height="293" viewBox="600 768 480 293"><path d="M725.85 831.95A103.45 103.45 0 1 1 697.51 1034.89L711.70 985.07A51.65 51.65 0 1 0 725.85 883.75z" fill="#f56954" stroke="#25292d" stroke-width="1.800" stroke-linejoin="round"/><path d="M697.51 1034.89A103.45 103.45 0 0 1 672.14 846.99L699.03 891.26A51.65 51.65 0 0 0 711.70 985.07z" fill="#3c8dbc" stroke="#25292d" stroke-width="1.800" stroke-linejoin="round"/><path d="M673.73 846.04A103.45 103.45 0 0 1 677.60 843.89L701.76 889.71A51.65 51.65 0 0 0 699.83 890.78z" fill="#f39c12" stroke="#25292d" stroke-width="1.800" stroke-linejoin="round"/><path d="M682.02 841.70A103.45 103.45 0 0 1 725.85 831.95L725.85 883.75A51.65 51.65 0 0 0 703.96 888.62z" fill="#222222" stroke="#25292d" stroke-width="1.800" stroke-linejoin="round"/></svg>
<div class="lgb" style="left:326.0px;top:52.8px;background:#f56954"><svg style="left:2.500px;top:3.200px" width="8" height="7" viewBox="0 0 8 7"><path d="M.8 3.600L3 5.800 7.300 1" fill="none" stroke="#222" stroke-width="1.150"/></svg></div>
<div class="lg" style="left:349.90px;letter-spacing:-1.250px;top:52.0px">A</div>
<div class="lgb" style="left:326.0px;top:75.8px;background:#3c8dbc"><svg style="left:2.500px;top:3.200px" width="8" height="7" viewBox="0 0 8 7"><path d="M.8 3.600L3 5.800 7.300 1" fill="none" stroke="#222" stroke-width="1.150"/></svg></div>
<div class="lg" style="left:349.90px;letter-spacing:-1.550px;top:75.0px">AAAA</div>
<div class="lgb" style="left:326.0px;top:98.8px;background:#00c0ef"><svg style="left:2.500px;top:3.200px" width="8" height="7" viewBox="0 0 8 7"><path d="M.8 3.600L3 5.800 7.300 1" fill="none" stroke="#222" stroke-width="1.150"/></svg></div>
<div class="lg" style="left:349.40px;letter-spacing:-1.600px;top:98.0px">SRV</div>
<div class="lgb" style="left:326.0px;top:121.8px;background:#f39c12"><svg style="left:2.500px;top:3.200px" width="8" height="7" viewBox="0 0 8 7"><path d="M.8 3.600L3 5.800 7.300 1" fill="none" stroke="#222" stroke-width="1.150"/></svg></div>
<div class="lg" style="left:349.40px;letter-spacing:-1.700px;top:121.0px">SOA</div>
<div class="lgb" style="left:326.0px;top:144.8px;background:#0073b7"><svg style="left:2.500px;top:3.200px" width="8" height="7" viewBox="0 0 8 7"><path d="M.8 3.600L3 5.800 7.300 1" fill="none" stroke="#222" stroke-width="1.150"/></svg></div>
<div class="lg" style="left:348.90px;letter-spacing:-0.850px;top:144.0px">PTR</div>
<div class="lgb" style="left:326.0px;top:167.8px;background:#001f3f"><svg style="left:2.500px;top:3.200px" width="8" height="7" viewBox="0 0 8 7"><path d="M.8 3.600L3 5.800 7.300 1" fill="none" stroke="#1b2c46" stroke-width="1.150"/></svg></div>
<div class="lg" style="left:349.65px;letter-spacing:-1.650px;top:167.0px">TXT</div>
<div class="lgb" style="left:326.0px;top:190.8px;background:#39cccc"><svg style="left:2.500px;top:3.200px" width="8" height="7" viewBox="0 0 8 7"><path d="M.8 3.600L3 5.800 7.300 1" fill="none" stroke="#222" stroke-width="1.150"/></svg></div>
<div class="lg" style="left:348.90px;letter-spacing:-0.838px;top:190.0px">NAPTR</div>
<div class="lgb" style="left:326.0px;top:213.8px;background:#8e24aa"><svg style="left:2.500px;top:3.200px" width="8" height="7" viewBox="0 0 8 7"><path d="M.8 3.600L3 5.800 7.300 1" fill="none" stroke="#3a1a45" stroke-width="1.150"/></svg></div>
<div class="lg" style="left:348.90px;letter-spacing:-0.750px;top:213.0px">NS</div>
<div class="lgb" style="left:326.0px;top:236.8px;background:#d81b60"><svg style="left:2.500px;top:3.200px" width="8" height="7" viewBox="0 0 8 7"><path d="M.8 3.600L3 5.800 7.300 1" fill="none" stroke="#4a1428" stroke-width="1.150"/></svg></div>
<div class="lg" style="left:349.40px;letter-spacing:-1.383px;top:236.0px">SVCB</div>
<div class="lgb" style="left:326.0px;top:259.8px;background:#222222"><svg style="left:2.500px;top:3.200px" width="8" height="7" viewBox="0 0 8 7"><path d="M.8 3.600L3 5.800 7.300 1" fill="none" stroke="#2c2c2c" stroke-width="1.150"/></svg></div>
<div class="lg" style="left:348.90px;letter-spacing:-0.588px;top:259.0px">HTTPS</div>
</div>
<div class="box" style="left:755px;top:726px;width:480px;height:293px"><div class="bh"><span style="left:8.85px;letter-spacing:0.077px">Upstream servers</span></div>
<svg style="left:-1px;top:-1px" width="480" height="293" viewBox="1110 768 480 293"><path d="M1235.75 831.95A103.45 103.45 0 1 1 1134.95 958.67L1185.42 947.02A51.65 51.65 0 1 0 1235.75 883.75z" fill="#f56954" stroke="#25292d" stroke-width="1.800" stroke-linejoin="round"/><path d="M1134.95 958.67A103.45 103.45 0 0 1 1133.87 953.36L1184.88 944.37A51.65 51.65 0 0 0 1185.42 947.02z" fill="#3c8dbc" stroke="#25292d" stroke-width="1.800" stroke-linejoin="round"/><path d="M1133.87 953.36A103.45 103.45 0 0 1 1145.27 885.25L1190.58 910.36A51.65 51.65 0 0 0 1184.88 944.37z" fill="#00a65a" stroke="#25292d" stroke-width="1.800" stroke-linejoin="round"/><path d="M1145.27 885.25A103.45 103.45 0 0 1 1183.71 845.99L1209.77 890.76A51.65 51.65 0 0 0 1190.58 910.36z" fill="#00c0ef" stroke="#25292d" stroke-width="1.800" stroke-linejoin="round"/><path d="M1183.71 845.99A103.45 103.45 0 0 1 1215.59 833.93L1225.68 884.74A51.65 51.65 0 0 0 1209.77 890.76z" fill="#f39c12" stroke="#25292d" stroke-width="1.800" stroke-linejoin="round"/><path d="M1215.59 833.93A103.45 103.45 0 0 1 1235.75 831.95L1235.75 883.75A51.65 51.65 0 0 0 1225.68 884.74z" fill="#0073b7" stroke="#25292d" stroke-width="1.800" stroke-linejoin="round"/></svg>
<div class="lgb" style="left:286.7px;top:98.1px;background:#f56954"><svg style="left:2.500px;top:3.200px" width="8" height="7" viewBox="0 0 8 7"><path d="M.8 3.600L3 5.800 7.300 1" fill="none" stroke="#222" stroke-width="1.150"/></svg></div>
<div class="lg" style="left:309.85px;letter-spacing:0.350px;top:97.9px">blocklist</div>
<div class="lgb" style="left:286.7px;top:121.1px;background:#3c8dbc"><svg style="left:2.500px;top:3.200px" width="8" height="7" viewBox="0 0 8 7"><path d="M.8 3.600L3 5.800 7.300 1" fill="none" stroke="#222" stroke-width="1.150"/></svg></div>
<div class="lg" style="left:310.10px;letter-spacing:-0.163px;top:120.9px">cache</div>
<div class="lgb" style="left:286.7px;top:144.1px;background:#00a65a"><svg style="left:2.500px;top:3.200px" width="8" height="7" viewBox="0 0 8 7"><path d="M.8 3.600L3 5.800 7.300 1" fill="none" stroke="#222" stroke-width="1.150"/></svg></div>
<div class="lg" style="left:310.10px;letter-spacing:0.015px;top:143.9px">one.one.one.one#53</div>
<div class="lgb" style="left:286.7px;top:167.1px;background:#00c0ef"><svg style="left:2.500px;top:3.200px" width="8" height="7" viewBox="0 0 8 7"><path d="M.8 3.600L3 5.800 7.300 1" fill="none" stroke="#222" stroke-width="1.150"/></svg></div>
<div class="lg" style="left:310.10px;letter-spacing:0.015px;top:166.9px">one.one.one.one#53</div>
<div class="lgb" style="left:286.7px;top:190.1px;background:#f39c12"><svg style="left:2.500px;top:3.200px" width="8" height="7" viewBox="0 0 8 7"><path d="M.8 3.600L3 5.800 7.300 1" fill="none" stroke="#222" stroke-width="1.150"/></svg></div>
<div class="lg" style="left:310.10px;letter-spacing:-0.021px;top:189.9px">dns.google#53</div>
<div class="lgb" style="left:286.7px;top:213.1px;background:#0073b7"><svg style="left:2.500px;top:3.200px" width="8" height="7" viewBox="0 0 8 7"><path d="M.8 3.600L3 5.800 7.300 1" fill="none" stroke="#222" stroke-width="1.150"/></svg></div>
<div class="lg" style="left:310.10px;letter-spacing:-0.021px;top:212.9px">dns.google#53</div>
</div>
</div></body></html>
